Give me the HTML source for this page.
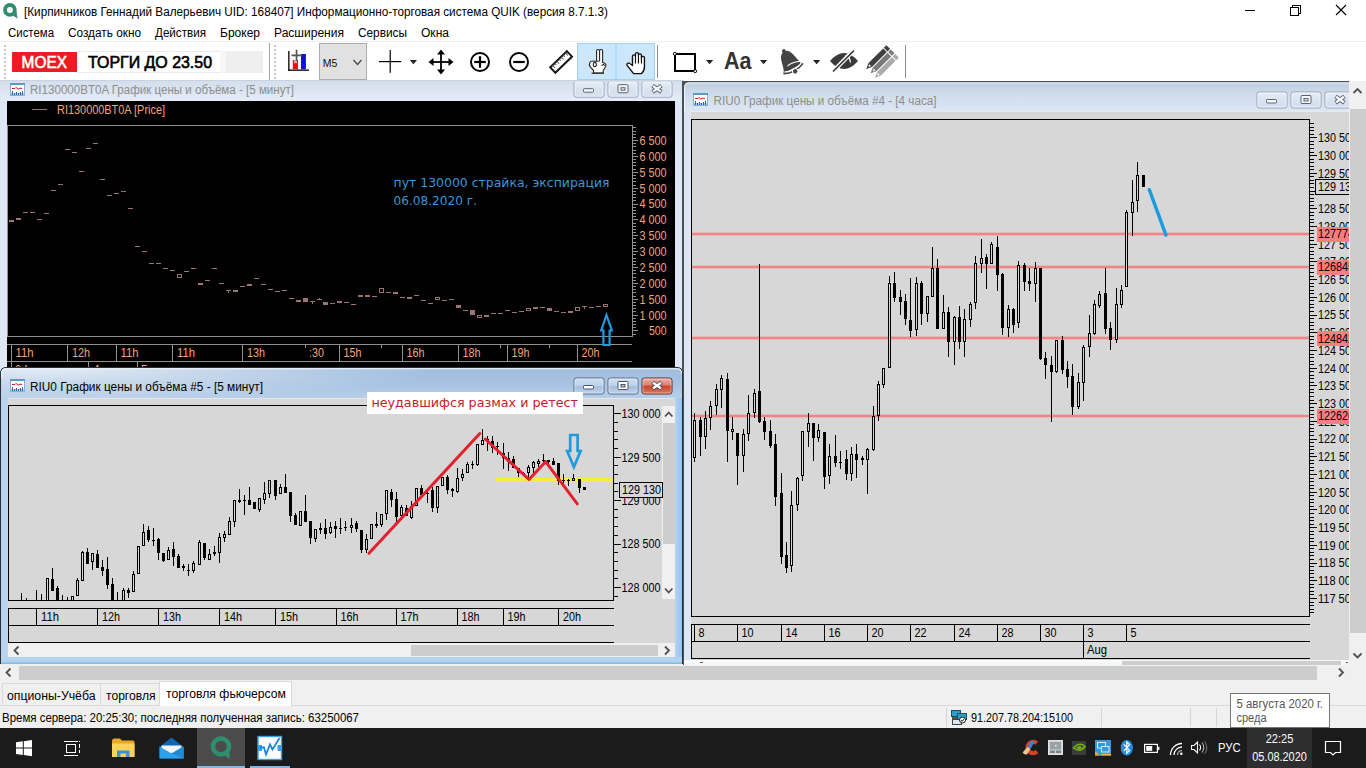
<!DOCTYPE html>
<html lang="ru"><head><meta charset="utf-8"><title>QUIK</title>
<style>html,body{margin:0;padding:0;background:#fff;overflow:hidden}svg{display:block}text{white-space:pre}</style>
</head><body>
<svg width="1366" height="768" viewBox="0 0 1366 768">
<defs><linearGradient id="gInact" x1="0" y1="0" x2="0" y2="1"><stop offset="0" stop-color="#d3deec"/><stop offset="1" stop-color="#e4ecf6"/></linearGradient><linearGradient id="gInact3" x1="0" y1="0" x2="0" y2="1"><stop offset="0" stop-color="#becde1"/><stop offset="0.5" stop-color="#d2deed"/><stop offset="1" stop-color="#dde7f4"/></linearGradient><linearGradient id="gAct" x1="0" y1="0" x2="0" y2="1"><stop offset="0" stop-color="#a0bcdc"/><stop offset="0.5" stop-color="#a8c3e2"/><stop offset="1" stop-color="#b7cfe9"/></linearGradient><radialGradient id="gActGlow" gradientUnits="userSpaceOnUse" cx="40" cy="368" r="1" gradientTransform="translate(40 368) scale(400 34) translate(-40 -368)"><stop offset="0" stop-color="#fff" stop-opacity=".72"/><stop offset=".45" stop-color="#fff" stop-opacity=".38"/><stop offset="1" stop-color="#fff" stop-opacity="0"/></radialGradient><linearGradient id="gBtnI" x1="0" y1="0" x2="0" y2="1"><stop offset="0" stop-color="#e6edf7"/><stop offset="0.5" stop-color="#d9e3f0"/><stop offset="1" stop-color="#d3dfee"/></linearGradient><linearGradient id="gBtnA" x1="0" y1="0" x2="0" y2="1"><stop offset="0" stop-color="#cfdff1"/><stop offset="0.47" stop-color="#bdd2ea"/><stop offset="0.5" stop-color="#a3bfdf"/><stop offset="1" stop-color="#bcd3ec"/></linearGradient><linearGradient id="gBtnX" x1="0" y1="0" x2="0" y2="1"><stop offset="0" stop-color="#eab4a8"/><stop offset="0.45" stop-color="#dd7f6c"/><stop offset="0.5" stop-color="#c8432b"/><stop offset="1" stop-color="#dc7a5e"/></linearGradient><linearGradient id="gActR" x1="0" y1="0" x2="1" y2="0"><stop offset="0" stop-color="#b9d3ee"/><stop offset="0.6" stop-color="#a4c8ee"/><stop offset="1" stop-color="#8cc6f2"/></linearGradient></defs>
<rect x="0" y="0" width="1366" height="80" fill="#ffffff" />
<g transform="translate(3,3)"><circle cx="6.9" cy="6.9" r="4.9" fill="none" stroke="#2f8f6d" stroke-width="3.8"/><path d="M7.5 10.5 L13.6 8.6 L14.4 15.8 Z" fill="#2f8f6d"/></g>
<text x="24" y="16" font-size="12" fill="#000" font-family='"Liberation Sans", sans-serif' textLength="584" lengthAdjust="spacingAndGlyphs" >[Кирпичников Геннадий Валерьевич UID: 168407] Информационно-торговая система QUIK (версия 8.7.1.3)</text>
<rect x="1245" y="10" width="10" height="1" fill="#000" shape-rendering="crispEdges"/>
<g fill="none" stroke="#000" stroke-width="1" shape-rendering="crispEdges"><rect x="1290.5" y="7.5" width="8" height="8"/><path d="M1292.5 7.5 V5.5 H1300.5 V13.5 H1298.5"/></g>
<path d="M1336 5 L1346 15 M1346 5 L1336 15" stroke="#000" stroke-width="1.1" fill="none"/>
<text x="8" y="37" font-size="12" fill="#000" font-family='"Liberation Sans", sans-serif' textLength="46" lengthAdjust="spacingAndGlyphs" >Система</text>
<text x="68" y="37" font-size="12" fill="#000" font-family='"Liberation Sans", sans-serif' textLength="73" lengthAdjust="spacingAndGlyphs" >Создать окно</text>
<text x="155" y="37" font-size="12" fill="#000" font-family='"Liberation Sans", sans-serif' textLength="51" lengthAdjust="spacingAndGlyphs" >Действия</text>
<text x="220" y="37" font-size="12" fill="#000" font-family='"Liberation Sans", sans-serif' textLength="40" lengthAdjust="spacingAndGlyphs" >Брокер</text>
<text x="274" y="37" font-size="12" fill="#000" font-family='"Liberation Sans", sans-serif' textLength="70" lengthAdjust="spacingAndGlyphs" >Расширения</text>
<text x="358" y="37" font-size="12" fill="#000" font-family='"Liberation Sans", sans-serif' textLength="49" lengthAdjust="spacingAndGlyphs" >Сервисы</text>
<text x="421" y="37" font-size="12" fill="#000" font-family='"Liberation Sans", sans-serif' textLength="28" lengthAdjust="spacingAndGlyphs" >Окна</text>
<rect x="0" y="41" width="1366" height="1" fill="#f0f0f0" />
<rect x="4" y="45" width="2" height="2" fill="#c8c8c8" shape-rendering="crispEdges"/>
<rect x="4" y="49" width="2" height="2" fill="#c8c8c8" shape-rendering="crispEdges"/>
<rect x="4" y="53" width="2" height="2" fill="#c8c8c8" shape-rendering="crispEdges"/>
<rect x="4" y="57" width="2" height="2" fill="#c8c8c8" shape-rendering="crispEdges"/>
<rect x="4" y="61" width="2" height="2" fill="#c8c8c8" shape-rendering="crispEdges"/>
<rect x="4" y="65" width="2" height="2" fill="#c8c8c8" shape-rendering="crispEdges"/>
<rect x="4" y="69" width="2" height="2" fill="#c8c8c8" shape-rendering="crispEdges"/>
<rect x="4" y="73" width="2" height="2" fill="#c8c8c8" shape-rendering="crispEdges"/>
<rect x="4" y="77" width="2" height="2" fill="#c8c8c8" shape-rendering="crispEdges"/>
<rect x="274" y="45" width="2" height="2" fill="#c8c8c8" shape-rendering="crispEdges"/>
<rect x="274" y="49" width="2" height="2" fill="#c8c8c8" shape-rendering="crispEdges"/>
<rect x="274" y="53" width="2" height="2" fill="#c8c8c8" shape-rendering="crispEdges"/>
<rect x="274" y="57" width="2" height="2" fill="#c8c8c8" shape-rendering="crispEdges"/>
<rect x="274" y="61" width="2" height="2" fill="#c8c8c8" shape-rendering="crispEdges"/>
<rect x="274" y="65" width="2" height="2" fill="#c8c8c8" shape-rendering="crispEdges"/>
<rect x="274" y="69" width="2" height="2" fill="#c8c8c8" shape-rendering="crispEdges"/>
<rect x="274" y="73" width="2" height="2" fill="#c8c8c8" shape-rendering="crispEdges"/>
<rect x="274" y="77" width="2" height="2" fill="#c8c8c8" shape-rendering="crispEdges"/>
<rect x="12" y="52" width="65" height="20" fill="#ed1c24" />
<text x="21.6" y="67.8" font-size="16.8" fill="#fff" font-family='"Liberation Sans", sans-serif' textLength="45.4" lengthAdjust="spacingAndGlyphs" stroke="#fff" stroke-width=".6">MOEX</text>
<text x="88" y="67.8" font-size="16.8" fill="#000" font-family='"Liberation Sans", sans-serif' textLength="124" lengthAdjust="spacingAndGlyphs" stroke="#000" stroke-width=".65">ТОРГИ ДО 23.50</text>
<rect x="77" y="51" width="143" height="1" fill="#ececec" />
<rect x="77" y="72" width="143" height="1" fill="#ececec" />
<rect x="220" y="51" width="6" height="22" fill="#f7f7f7" />
<rect x="226" y="51" width="37" height="22" fill="#efefef" />
<rect x="269" y="43" width="1" height="37" fill="#a0a0a0" shape-rendering="crispEdges"/>
<g><rect x="288.2" y="51" width="1.3" height="19.8" fill="#000"/><rect x="288.2" y="69.5" width="20.8" height="1.3" fill="#000"/><rect x="292.8" y="60" width="5.2" height="9.3" fill="#e81010"/><rect x="294" y="60" width="3" height="3.2" fill="#f0a0a0"/><rect x="301" y="54" width="4.9" height="15.3" fill="#0a10e0"/><rect x="295.7" y="49.7" width="1.7" height="11.3" fill="#555"/><rect x="291.5" y="54.5" width="10.5" height="1.8" fill="#555"/></g>
<rect x="319" y="43" width="48" height="37" fill="#e1e1e1" />
<rect x="319.5" y="43.5" width="47" height="36" fill="none" stroke="#adadad"/>
<text x="322.8" y="66.6" font-size="11.5" fill="#111" font-family='"Liberation Sans", sans-serif' textLength="14.6" lengthAdjust="spacingAndGlyphs" >M5</text>
<path d="M353.5 60 L357.5 64.5 L361.5 60" stroke="#444" stroke-width="1.2" fill="none"/>
<rect x="379" y="61" width="22.2" height="1.2" fill="#000" />
<rect x="389.6" y="50" width="1.2" height="22.8" fill="#000" />
<path d="M409.8 60 h7.2 l-3.6 4.2 z" fill="#222"/>
<g transform="translate(441,62)" fill="#000"><rect x="-9" y="-0.9" width="18" height="1.8"/><rect x="-0.9" y="-9" width="1.8" height="18"/><path d="M0 -12.5 L4 -7.5 H-4 Z"/><path d="M0 12.5 L4 7.5 H-4 Z"/><path d="M-12.5 0 L-7.5 -4 V4 Z"/><path d="M12.5 0 L7.5 -4 V4 Z"/></g>
<circle cx="480" cy="62" r="9" fill="none" stroke="#000" stroke-width="2"/>
<rect x="474.2" y="60.9" width="11.6" height="2.2" fill="#000" />
<rect x="478.9" y="56.2" width="2.2" height="11.6" fill="#000" />
<circle cx="519" cy="62" r="9" fill="none" stroke="#000" stroke-width="2"/>
<rect x="513.2" y="60.9" width="11.6" height="2.2" fill="#000" />
<g transform="translate(561.1,62) rotate(-44)"><rect x="-11.6" y="-3.7" width="23.2" height="7.4" fill="#fff" stroke="#1c1c1c" stroke-width="2"/><rect x="-9" y="-3.7" width="0.9" height="3.6" fill="#555"/><rect x="-6" y="-3.7" width="0.9" height="2.6" fill="#555"/><rect x="-3" y="-3.7" width="0.9" height="3.6" fill="#555"/><rect x="0" y="-3.7" width="0.9" height="2.6" fill="#555"/><rect x="3" y="-3.7" width="0.9" height="3.6" fill="#555"/><rect x="6" y="-3.7" width="0.9" height="2.6" fill="#555"/><rect x="9" y="-3.7" width="0.9" height="3.6" fill="#555"/></g>
<rect x="577" y="43" width="78" height="37" fill="#cce6fb" />
<rect x="577.5" y="43.5" width="77" height="36" fill="none" stroke="#9fd0f7"/>
<rect x="615.5" y="43" width="1" height="37" fill="#9fd0f7" />
<g transform="translate(597,62)" fill="#fff" stroke="#222" stroke-width="1.1" stroke-linejoin="round"><path d="M-0.4 0 V-11 a1.5 1.5 0 0 1 3 0 V-1 M2.6 -1 V-11 a1.5 1.5 0 0 1 3 0 V0.5 l2.2 .8 q1.6 1 1 3 l-2.6 4.2 v2.5 h-9.6 v-2.5 l-3.4 -3.6 q-1.6 -2.4 -.2 -4.6 q1.6 -2 3.6 -1 z"/><path d="M-5.4 11.2 h12.4" fill="none"/><ellipse cx="-2.2" cy="2.6" rx="1.5" ry="2.2" fill="none"/><path d="M4.6 3.4 l1.8 -1 l1.4 1.2" fill="none"/></g>
<g transform="translate(636.5,62.5) scale(1.15,1.05)" fill="#fff" stroke="#111" stroke-width="1.2" stroke-linejoin="round"><path d="M-3.5 3 V-6 a1.3 1.3 0 0 1 2.6 0 V-8 a1.3 1.3 0 0 1 2.6 0 V-7 a1.3 1.3 0 0 1 2.6 0 V-4.5 a1.3 1.3 0 0 1 2.6 0 V4 q0 4 -2.5 6.5 H-2.5 L-8 3 q-1 -1.6 .6 -2.3 q1.2 -.3 2 .6 z"/><path d="M-.9 -6 V1 M1.7 -7 V1 M4.3 -5 V1" fill="none" stroke-width="1"/></g>
<rect x="657" y="45" width="1" height="33" fill="#8a8a8a" shape-rendering="crispEdges"/>
<rect x="675" y="54" width="20" height="17" fill="#fff" stroke="#000" stroke-width="2"/><circle cx="674.8" cy="53.8" r="1.5" fill="#fff" stroke="#000" stroke-width="1"/><circle cx="695.2" cy="71.2" r="1.5" fill="#fff" stroke="#000" stroke-width="1"/>
<path d="M706 60 h7.2 l-3.6 4.2 z" fill="#222"/>
<text x="724" y="68.6" font-size="24" fill="#333" font-family='"Liberation Sans", sans-serif' font-weight="bold" textLength="27.5" lengthAdjust="spacingAndGlyphs" >Aa</text>
<path d="M760 60 h7.2 l-3.6 4.2 z" fill="#222"/>
<g transform="translate(789.3,61.3) rotate(-28)" fill="#444"><circle cx="0" cy="-11.6" r="1.9"/><path d="M-2 -10.8 C-8.5 -8 -6.5 3.5 -10.8 8 L10.8 8 C6.5 3.5 8.5 -8 2 -10.8 Z"/><path d="M-9.5 7.2 Q0 11.5 9.8 7.2 L9.6 5 Q0 1.5 -4 3.5" fill="none" stroke="#fff" stroke-width="1.1"/><path d="M-11 8.3 Q0 13.6 11.2 8.3" fill="none" stroke="#444" stroke-width="1.6"/><circle cx="0.5" cy="11.6" r="2.7" stroke="#fff" stroke-width=".9"/></g>
<path d="M813 60 h7.2 l-3.6 4.2 z" fill="#222"/>
<g transform="translate(844,61)"><path d="M-14 0 Q0 -16 14 0 Q0 16 -14 0 Z" fill="#3a3a3a"/><path d="M1 -5 Q6 -4.5 6.5 1.5" fill="none" stroke="#fff" stroke-width="1.3"/><path d="M-12 11.5 L10 -11" stroke="#fff" stroke-width="4.2"/><path d="M-11 10.5 L10 -10.5" stroke="#3a3a3a" stroke-width="1.7"/></g>
<g transform="translate(883,61) rotate(-45)"><g transform="translate(0,-6.2)"><rect x="-12" y="-2.6" width="21" height="5.2" fill="#3f3f3f"/><path d="M-12 -2.6 L-17.5 0 L-12 2.6 Z" fill="#3f3f3f"/><circle cx="-13" cy="0" r="1" fill="#fff"/><rect x="10" y="-2.6" width="3.6" height="5.2" fill="#3f3f3f"/></g><g transform="translate(0,0)"><rect x="-12" y="-2.6" width="21" height="5.2" fill="#7a7a7a"/><path d="M-12 -2.6 L-17.5 0 L-12 2.6 Z" fill="#7a7a7a"/><circle cx="-13" cy="0" r="1" fill="#fff"/><rect x="10" y="-2.6" width="3.6" height="5.2" fill="#7a7a7a"/></g><g transform="translate(0,6.2)"><rect x="-12" y="-2.6" width="21" height="5.2" fill="#ababab"/><path d="M-12 -2.6 L-17.5 0 L-12 2.6 Z" fill="#ababab"/><circle cx="-13" cy="0" r="1" fill="#fff"/><rect x="10" y="-2.6" width="3.6" height="5.2" fill="#ababab"/></g></g>
<rect x="905" y="45" width="1" height="33" fill="#8a8a8a" shape-rendering="crispEdges"/>
<rect x="0" y="80" width="684" height="290" fill="#dee8f4" />
<rect x="0" y="80" width="684" height="21" fill="url(#gInact)" />
<rect x="0" y="80" width="684" height="1" fill="#c9d3df" />
<rect x="682" y="81" width="2" height="584" fill="#4a5058" shape-rendering="crispEdges"/>
<g transform="translate(10,83)" shape-rendering="crispEdges"><rect x="0" y="0" width="15" height="13" fill="#8fb0cf"/><rect x="1" y="1" width="13" height="11" fill="#fff"/><rect x="0" y="0" width="15" height="2" fill="#5a9bc4"/><path d="M2 5.5 h3 l1.2 -1.2 l1.6 2 l1.2 -1 h3.2" fill="none" stroke="#c82828" stroke-width="1" shape-rendering="auto"/><rect x="1" y="10" width="13" height="2" fill="#a9cdea"/><rect x="2" y="8" width="1" height="4" fill="#2f66a8"/><rect x="4" y="10" width="1" height="2" fill="#2f66a8"/><rect x="6" y="9" width="1" height="3" fill="#2f66a8"/><rect x="8" y="10" width="1" height="2" fill="#2f66a8"/><rect x="10" y="9" width="1" height="3" fill="#2f66a8"/><rect x="12" y="8" width="1" height="4" fill="#2f66a8"/></g>
<text x="30" y="94" font-size="12" fill="#8d8d8d" font-family='"Liberation Sans", sans-serif' textLength="264" lengthAdjust="spacingAndGlyphs" >RI130000BT0A График цены и объёма - [5 минут]</text>
<clipPath id="cw1b"><rect x="560" y="82" width="124" height="30"/></clipPath><g clip-path="url(#cw1b)">
<rect x="574.0" y="81.2" width="30" height="16" rx="2.5" fill="url(#gBtnI)" stroke="#95a3b8"/>
<rect x="575.0" y="82.2" width="28" height="14" rx="1.5" fill="none" stroke="#fff" stroke-opacity="0.6"/>
<rect x="583.5" y="88.7" width="10" height="3.5" rx=".8" fill="#f4f6fa" stroke="#5c6472" stroke-width="1"/>
<rect x="608.0" y="81.2" width="30" height="16" rx="2.5" fill="url(#gBtnI)" stroke="#95a3b8"/>
<rect x="609.0" y="82.2" width="28" height="14" rx="1.5" fill="none" stroke="#fff" stroke-opacity="0.6"/>
<rect x="618.0" y="84.7" width="10" height="8" rx=".8" fill="#f4f6fa" stroke="#5c6472" stroke-width="1"/><rect x="621.0" y="87.7" width="4" height="2.5" fill="#dbe4f0" stroke="#5c6472" stroke-width="1"/>
<rect x="642.0" y="81.2" width="30" height="16" rx="2.5" fill="url(#gBtnI)" stroke="#95a3b8"/>
<rect x="643.0" y="82.2" width="28" height="14" rx="1.5" fill="none" stroke="#fff" stroke-opacity="0.6"/>
<path d="M652.6 85.60000000000001 L661.4 92.0 M661.4 85.60000000000001 L652.6 92.0" stroke="#5c6472" stroke-width="4.2" stroke-linecap="butt"/><path d="M653.1 86.0 L660.9 91.60000000000001 M660.9 86.0 L653.1 91.60000000000001" stroke="#f4f6fa" stroke-width="2.4" stroke-linecap="butt"/>
</g>
<rect x="7" y="101" width="668" height="268" fill="#000000" />
<g shape-rendering="crispEdges">
<rect x="32" y="109" width="15" height="1" fill="#9c7272" />
<rect x="7" y="125" width="626" height="1" fill="#909090" />
<rect x="7" y="125" width="1" height="212" fill="#909090" />
<rect x="632" y="125" width="1" height="212" fill="#909090" />
<rect x="7" y="336" width="626" height="1" fill="#909090" />
<rect x="7" y="344" width="625" height="1" fill="#909090" />
<rect x="7" y="361" width="625" height="1" fill="#909090" />
<rect x="11" y="344" width="1" height="18" fill="#909090" />
<rect x="67" y="344" width="1" height="18" fill="#909090" />
<rect x="116" y="344" width="1" height="18" fill="#909090" />
<rect x="172" y="344" width="1" height="18" fill="#909090" />
<rect x="242" y="344" width="1" height="18" fill="#909090" />
<rect x="339" y="344" width="1" height="18" fill="#909090" />
<rect x="402" y="344" width="1" height="18" fill="#909090" />
<rect x="458" y="344" width="1" height="18" fill="#909090" />
<rect x="507" y="344" width="1" height="18" fill="#909090" />
<rect x="577" y="344" width="1" height="18" fill="#909090" />
<rect x="305" y="344" width="1" height="4" fill="#909090" />
<rect x="381" y="344" width="1" height="4" fill="#909090" />
<rect x="500" y="344" width="1" height="4" fill="#909090" />
<rect x="549" y="344" width="1" height="4" fill="#909090" />
<rect x="11" y="361" width="1" height="8" fill="#909090" />
<rect x="88" y="361" width="1" height="8" fill="#909090" />
<rect x="137" y="361" width="1" height="8" fill="#909090" />
<rect x="633" y="127" width="3" height="1" fill="#909090" />
<rect x="633" y="131" width="3" height="1" fill="#909090" />
<rect x="633" y="134" width="3" height="1" fill="#909090" />
<rect x="633" y="137" width="3" height="1" fill="#909090" />
<rect x="633" y="140" width="5" height="1" fill="#909090" />
<rect x="633" y="143" width="3" height="1" fill="#909090" />
<rect x="633" y="146" width="3" height="1" fill="#909090" />
<rect x="633" y="150" width="3" height="1" fill="#909090" />
<rect x="633" y="153" width="3" height="1" fill="#909090" />
<rect x="633" y="156" width="5" height="1" fill="#909090" />
<rect x="633" y="159" width="3" height="1" fill="#909090" />
<rect x="633" y="162" width="3" height="1" fill="#909090" />
<rect x="633" y="165" width="3" height="1" fill="#909090" />
<rect x="633" y="169" width="3" height="1" fill="#909090" />
<rect x="633" y="172" width="5" height="1" fill="#909090" />
<rect x="633" y="175" width="3" height="1" fill="#909090" />
<rect x="633" y="178" width="3" height="1" fill="#909090" />
<rect x="633" y="181" width="3" height="1" fill="#909090" />
<rect x="633" y="185" width="3" height="1" fill="#909090" />
<rect x="633" y="188" width="5" height="1" fill="#909090" />
<rect x="633" y="191" width="3" height="1" fill="#909090" />
<rect x="633" y="194" width="3" height="1" fill="#909090" />
<rect x="633" y="197" width="3" height="1" fill="#909090" />
<rect x="633" y="200" width="3" height="1" fill="#909090" />
<rect x="633" y="204" width="5" height="1" fill="#909090" />
<rect x="633" y="207" width="3" height="1" fill="#909090" />
<rect x="633" y="210" width="3" height="1" fill="#909090" />
<rect x="633" y="213" width="3" height="1" fill="#909090" />
<rect x="633" y="216" width="3" height="1" fill="#909090" />
<rect x="633" y="219" width="5" height="1" fill="#909090" />
<rect x="633" y="223" width="3" height="1" fill="#909090" />
<rect x="633" y="226" width="3" height="1" fill="#909090" />
<rect x="633" y="229" width="3" height="1" fill="#909090" />
<rect x="633" y="232" width="3" height="1" fill="#909090" />
<rect x="633" y="235" width="5" height="1" fill="#909090" />
<rect x="633" y="238" width="3" height="1" fill="#909090" />
<rect x="633" y="242" width="3" height="1" fill="#909090" />
<rect x="633" y="245" width="3" height="1" fill="#909090" />
<rect x="633" y="248" width="3" height="1" fill="#909090" />
<rect x="633" y="251" width="5" height="1" fill="#909090" />
<rect x="633" y="254" width="3" height="1" fill="#909090" />
<rect x="633" y="258" width="3" height="1" fill="#909090" />
<rect x="633" y="261" width="3" height="1" fill="#909090" />
<rect x="633" y="264" width="3" height="1" fill="#909090" />
<rect x="633" y="267" width="5" height="1" fill="#909090" />
<rect x="633" y="270" width="3" height="1" fill="#909090" />
<rect x="633" y="273" width="3" height="1" fill="#909090" />
<rect x="633" y="277" width="3" height="1" fill="#909090" />
<rect x="633" y="280" width="3" height="1" fill="#909090" />
<rect x="633" y="283" width="5" height="1" fill="#909090" />
<rect x="633" y="286" width="3" height="1" fill="#909090" />
<rect x="633" y="289" width="3" height="1" fill="#909090" />
<rect x="633" y="292" width="3" height="1" fill="#909090" />
<rect x="633" y="296" width="3" height="1" fill="#909090" />
<rect x="633" y="299" width="5" height="1" fill="#909090" />
<rect x="633" y="302" width="3" height="1" fill="#909090" />
<rect x="633" y="305" width="3" height="1" fill="#909090" />
<rect x="633" y="308" width="3" height="1" fill="#909090" />
<rect x="633" y="311" width="3" height="1" fill="#909090" />
<rect x="633" y="315" width="5" height="1" fill="#909090" />
<rect x="633" y="318" width="3" height="1" fill="#909090" />
<rect x="633" y="321" width="3" height="1" fill="#909090" />
<rect x="633" y="324" width="3" height="1" fill="#909090" />
<rect x="633" y="327" width="3" height="1" fill="#909090" />
<rect x="633" y="330" width="5" height="1" fill="#909090" />
<rect x="633" y="334" width="3" height="1" fill="#909090" />
</g>
<text x="57" y="113.5" font-size="12" fill="#f2a57a" font-family='"Liberation Sans", sans-serif' textLength="108" lengthAdjust="spacingAndGlyphs" >RI130000BT0A [Price]</text>
<text x="666.5" y="145" font-size="12" fill="#f2a57a" font-family='"Liberation Sans", sans-serif' textLength="27" lengthAdjust="spacingAndGlyphs" text-anchor="end" >6 500</text>
<text x="666.5" y="160.865" font-size="12" fill="#f2a57a" font-family='"Liberation Sans", sans-serif' textLength="27" lengthAdjust="spacingAndGlyphs" text-anchor="end" >6 000</text>
<text x="666.5" y="176.73" font-size="12" fill="#f2a57a" font-family='"Liberation Sans", sans-serif' textLength="27" lengthAdjust="spacingAndGlyphs" text-anchor="end" >5 500</text>
<text x="666.5" y="192.595" font-size="12" fill="#f2a57a" font-family='"Liberation Sans", sans-serif' textLength="27" lengthAdjust="spacingAndGlyphs" text-anchor="end" >5 000</text>
<text x="666.5" y="208.46" font-size="12" fill="#f2a57a" font-family='"Liberation Sans", sans-serif' textLength="27" lengthAdjust="spacingAndGlyphs" text-anchor="end" >4 500</text>
<text x="666.5" y="224.325" font-size="12" fill="#f2a57a" font-family='"Liberation Sans", sans-serif' textLength="27" lengthAdjust="spacingAndGlyphs" text-anchor="end" >4 000</text>
<text x="666.5" y="240.19" font-size="12" fill="#f2a57a" font-family='"Liberation Sans", sans-serif' textLength="27" lengthAdjust="spacingAndGlyphs" text-anchor="end" >3 500</text>
<text x="666.5" y="256.055" font-size="12" fill="#f2a57a" font-family='"Liberation Sans", sans-serif' textLength="27" lengthAdjust="spacingAndGlyphs" text-anchor="end" >3 000</text>
<text x="666.5" y="271.92" font-size="12" fill="#f2a57a" font-family='"Liberation Sans", sans-serif' textLength="27" lengthAdjust="spacingAndGlyphs" text-anchor="end" >2 500</text>
<text x="666.5" y="287.785" font-size="12" fill="#f2a57a" font-family='"Liberation Sans", sans-serif' textLength="27" lengthAdjust="spacingAndGlyphs" text-anchor="end" >2 000</text>
<text x="666.5" y="303.65" font-size="12" fill="#f2a57a" font-family='"Liberation Sans", sans-serif' textLength="27" lengthAdjust="spacingAndGlyphs" text-anchor="end" >1 500</text>
<text x="666.5" y="319.515" font-size="12" fill="#f2a57a" font-family='"Liberation Sans", sans-serif' textLength="27" lengthAdjust="spacingAndGlyphs" text-anchor="end" >1 000</text>
<text x="666.5" y="335.38" font-size="12" fill="#f2a57a" font-family='"Liberation Sans", sans-serif' textLength="17.5" lengthAdjust="spacingAndGlyphs" text-anchor="end" >500</text>
<text x="15.6" y="357" font-size="12" fill="#f2a57a" font-family='"Liberation Sans", sans-serif' textLength="18" lengthAdjust="spacingAndGlyphs" >11h</text>
<text x="72" y="357" font-size="12" fill="#f2a57a" font-family='"Liberation Sans", sans-serif' textLength="18" lengthAdjust="spacingAndGlyphs" >12h</text>
<text x="120.5" y="357" font-size="12" fill="#f2a57a" font-family='"Liberation Sans", sans-serif' textLength="18" lengthAdjust="spacingAndGlyphs" >11h</text>
<text x="177" y="357" font-size="12" fill="#f2a57a" font-family='"Liberation Sans", sans-serif' textLength="18" lengthAdjust="spacingAndGlyphs" >11h</text>
<text x="247" y="357" font-size="12" fill="#f2a57a" font-family='"Liberation Sans", sans-serif' textLength="18" lengthAdjust="spacingAndGlyphs" >13h</text>
<text x="309" y="357" font-size="12" fill="#f2a57a" font-family='"Liberation Sans", sans-serif' textLength="15" lengthAdjust="spacingAndGlyphs" >:30</text>
<text x="343.5" y="357" font-size="12" fill="#f2a57a" font-family='"Liberation Sans", sans-serif' textLength="18" lengthAdjust="spacingAndGlyphs" >15h</text>
<text x="406.5" y="357" font-size="12" fill="#f2a57a" font-family='"Liberation Sans", sans-serif' textLength="18" lengthAdjust="spacingAndGlyphs" >16h</text>
<text x="462.5" y="357" font-size="12" fill="#f2a57a" font-family='"Liberation Sans", sans-serif' textLength="18" lengthAdjust="spacingAndGlyphs" >18h</text>
<text x="511.5" y="357" font-size="12" fill="#f2a57a" font-family='"Liberation Sans", sans-serif' textLength="18" lengthAdjust="spacingAndGlyphs" >19h</text>
<text x="581.5" y="357" font-size="12" fill="#f2a57a" font-family='"Liberation Sans", sans-serif' textLength="18" lengthAdjust="spacingAndGlyphs" >20h</text>
<clipPath id="cdt1"><rect x="7" y="360" width="625" height="8"/></clipPath><g clip-path="url(#cdt1)">
<text x="15.5" y="373.5" font-size="12" fill="#f2a57a" font-family='"Liberation Sans", sans-serif' textLength="24" lengthAdjust="spacingAndGlyphs" >3 Aug</text>
<text x="93" y="373.5" font-size="12" fill="#f2a57a" font-family='"Liberation Sans", sans-serif' >4</text>
<text x="141" y="373.5" font-size="12" fill="#f2a57a" font-family='"Liberation Sans", sans-serif' >5</text>
</g>
<text x="393.5" y="186.8" font-size="12" fill="#3a96d6" font-family='"DejaVu Sans", "Liberation Sans", sans-serif' textLength="216" lengthAdjust="spacingAndGlyphs" >пут 130000 страйка, экспирация</text>
<text x="393.5" y="205.4" font-size="12" fill="#3a96d6" font-family='"DejaVu Sans", "Liberation Sans", sans-serif' textLength="83.5" lengthAdjust="spacingAndGlyphs" >06.08.2020 г.</text>
<g shape-rendering="crispEdges">
<rect x="9" y="220" width="5" height="2" fill="#9c7272" />
<rect x="16" y="218" width="5" height="2" fill="#9c7272" />
<rect x="23" y="212" width="5" height="1" fill="#9c7272" />
<rect x="30" y="212" width="5" height="1" fill="#9c7272" />
<rect x="37" y="219" width="5" height="1" fill="#9c7272" />
<rect x="44" y="213" width="5" height="1" fill="#9c7272" />
<rect x="51" y="190" width="5" height="1" fill="#9c7272" />
<rect x="58" y="184" width="5" height="1" fill="#9c7272" />
<rect x="65" y="149" width="5" height="1" fill="#9c7272" />
<rect x="72" y="152" width="5" height="1" fill="#9c7272" />
<rect x="79" y="171" width="5" height="1" fill="#9c7272" />
<rect x="86" y="148" width="5" height="1" fill="#9c7272" />
<rect x="93" y="143" width="5" height="1" fill="#9c7272" />
<rect x="100" y="179" width="5" height="1" fill="#9c7272" />
<rect x="107" y="195" width="5" height="1" fill="#9c7272" />
<rect x="114" y="193" width="5" height="1" fill="#9c7272" />
<rect x="121" y="191" width="5" height="1" fill="#9c7272" />
<rect x="128" y="208" width="5" height="1" fill="#9c7272" />
<rect x="135" y="246" width="5" height="1" fill="#9c7272" />
<rect x="142" y="251" width="5" height="1" fill="#9c7272" />
<rect x="149" y="263" width="5" height="1" fill="#9c7272" />
<rect x="156" y="263" width="5" height="1" fill="#9c7272" />
<rect x="163" y="268" width="5" height="1" fill="#9c7272" />
<rect x="170" y="270" width="5" height="1" fill="#9c7272" />
<rect x="177" y="274" width="5" height="4" fill="#9c7272" />
<rect x="178" y="275" width="3" height="2" fill="#000" />
<rect x="184" y="271" width="5" height="1" fill="#9c7272" />
<rect x="191" y="268" width="5" height="1" fill="#9c7272" />
<rect x="198" y="283" width="5" height="2" fill="#9c7272" />
<rect x="205" y="280" width="5" height="1" fill="#9c7272" />
<rect x="212" y="268" width="5" height="1" fill="#9c7272" />
<rect x="219" y="283" width="5" height="1" fill="#9c7272" />
<rect x="226" y="290" width="5" height="1" fill="#9c7272" />
<rect x="228" y="291" width="1" height="2" fill="#9c7272" />
<rect x="233" y="290" width="5" height="2" fill="#9c7272" />
<rect x="240" y="286" width="5" height="1" fill="#9c7272" />
<rect x="247" y="284" width="5" height="2" fill="#9c7272" />
<rect x="254" y="278" width="5" height="1" fill="#9c7272" />
<rect x="261" y="284" width="5" height="1" fill="#9c7272" />
<rect x="268" y="289" width="5" height="1" fill="#9c7272" />
<rect x="275" y="291" width="5" height="1" fill="#9c7272" />
<rect x="282" y="290" width="5" height="1" fill="#9c7272" />
<rect x="289" y="298" width="5" height="1" fill="#9c7272" />
<rect x="296" y="300" width="5" height="2" fill="#9c7272" />
<rect x="303" y="298" width="5" height="4" fill="#9c7272" />
<rect x="310" y="301" width="5" height="1" fill="#9c7272" />
<rect x="312" y="302" width="1" height="2" fill="#9c7272" />
<rect x="317" y="299" width="5" height="1" fill="#9c7272" />
<rect x="319" y="298" width="1" height="1" fill="#9c7272" />
<rect x="323" y="302" width="5" height="3" fill="#9c7272" />
<rect x="330" y="303" width="5" height="1" fill="#9c7272" />
<rect x="337" y="301" width="5" height="2" fill="#9c7272" />
<rect x="344" y="302" width="5" height="1" fill="#9c7272" />
<rect x="351" y="304" width="5" height="1" fill="#9c7272" />
<rect x="358" y="295" width="5" height="2" fill="#9c7272" />
<rect x="365" y="295" width="5" height="2" fill="#9c7272" />
<rect x="372" y="296" width="5" height="1" fill="#9c7272" />
<rect x="379" y="288" width="5" height="5" fill="#9c7272" />
<rect x="380" y="289" width="3" height="3" fill="#000" />
<rect x="386" y="292" width="5" height="1" fill="#9c7272" />
<rect x="393" y="292" width="5" height="2" fill="#9c7272" />
<rect x="400" y="297" width="5" height="1" fill="#9c7272" />
<rect x="407" y="297" width="5" height="2" fill="#9c7272" />
<rect x="414" y="295" width="5" height="1" fill="#9c7272" />
<rect x="421" y="300" width="5" height="1" fill="#9c7272" />
<rect x="428" y="303" width="5" height="1" fill="#9c7272" />
<rect x="435" y="297" width="5" height="3" fill="#9c7272" />
<rect x="436" y="298" width="3" height="1" fill="#000" />
<rect x="442" y="300" width="5" height="1" fill="#9c7272" />
<rect x="449" y="299" width="5" height="1" fill="#9c7272" />
<rect x="456" y="305" width="5" height="3" fill="#9c7272" />
<rect x="463" y="310" width="5" height="1" fill="#9c7272" />
<rect x="470" y="310" width="5" height="5" fill="#9c7272" />
<rect x="477" y="315" width="5" height="3" fill="#9c7272" />
<rect x="478" y="316" width="3" height="1" fill="#000" />
<rect x="484" y="315" width="5" height="2" fill="#9c7272" />
<rect x="491" y="313" width="5" height="1" fill="#9c7272" />
<rect x="498" y="313" width="5" height="1" fill="#9c7272" />
<rect x="505" y="310" width="5" height="1" fill="#9c7272" />
<rect x="512" y="312" width="5" height="1" fill="#9c7272" />
<rect x="519" y="311" width="5" height="1" fill="#9c7272" />
<rect x="526" y="308" width="5" height="3" fill="#9c7272" />
<rect x="527" y="309" width="3" height="1" fill="#000" />
<rect x="533" y="307" width="5" height="2" fill="#9c7272" />
<rect x="540" y="307" width="5" height="1" fill="#9c7272" />
<rect x="547" y="308" width="5" height="3" fill="#9c7272" />
<rect x="554" y="311" width="5" height="1" fill="#9c7272" />
<rect x="561" y="312" width="5" height="1" fill="#9c7272" />
<rect x="568" y="311" width="5" height="2" fill="#9c7272" />
<rect x="575" y="307" width="5" height="4" fill="#9c7272" />
<rect x="576" y="308" width="3" height="2" fill="#000" />
<rect x="582" y="306" width="5" height="1" fill="#9c7272" />
<rect x="584" y="307" width="1" height="2" fill="#9c7272" />
<rect x="589" y="307" width="5" height="1" fill="#9c7272" />
<rect x="596" y="306" width="5" height="1" fill="#9c7272" />
<rect x="603" y="304" width="5" height="3" fill="#9c7272" />
<rect x="604" y="305" width="3" height="1" fill="#000" />
</g>
<path d="M606.5 315 L611.8 330.5 H609.6 V345 H603.4 V330.5 H601.2 Z" fill="none" stroke="#1e9ae0" stroke-width="2.2" stroke-linejoin="miter"/>
<rect x="684" y="81" width="666" height="584" fill="#dde7f4" />
<rect x="684" y="82" width="665" height="30" fill="url(#gInact3)" />
<path d="M682 81 H1349 V82.3 H689 Q684 82.3 684 87.3 V120 H682 Z" fill="#4a5058"/>
<path d="M1349 83 H689.5 Q684.6 83 684.6 88 V112" fill="none" stroke="#eef3f9" stroke-width="1"/>
<rect x="691" y="111" width="658" height="550" fill="#d7d7d7" />
<rect x="691" y="111" width="658" height="1" fill="#e6e9ee" />
<rect x="684" y="660" width="665" height="5" fill="#f4f6f9" />
<rect x="684" y="661" width="665" height="1" fill="#ffffff" />
<rect x="700" y="662" width="3" height="1" fill="#555" />
<rect x="1122" y="661" width="219" height="4" fill="#cdcdcd" />
<rect x="1346" y="662" width="2" height="1" fill="#555" />
<g transform="translate(693,93)" shape-rendering="crispEdges"><rect x="0" y="0" width="15" height="13" fill="#8fb0cf"/><rect x="1" y="1" width="13" height="11" fill="#fff"/><rect x="0" y="0" width="15" height="2" fill="#5a9bc4"/><path d="M2 5.5 h3 l1.2 -1.2 l1.6 2 l1.2 -1 h3.2" fill="none" stroke="#c82828" stroke-width="1" shape-rendering="auto"/><rect x="1" y="10" width="13" height="2" fill="#a9cdea"/><rect x="2" y="8" width="1" height="4" fill="#2f66a8"/><rect x="4" y="10" width="1" height="2" fill="#2f66a8"/><rect x="6" y="9" width="1" height="3" fill="#2f66a8"/><rect x="8" y="10" width="1" height="2" fill="#2f66a8"/><rect x="10" y="9" width="1" height="3" fill="#2f66a8"/><rect x="12" y="8" width="1" height="4" fill="#2f66a8"/></g>
<text x="713.5" y="105" font-size="12" fill="#8d8d8d" font-family='"Liberation Sans", sans-serif' textLength="223" lengthAdjust="spacingAndGlyphs" >RIU0 График цены и объёма #4 - [4 часа]</text>
<clipPath id="cw3"><rect x="684" y="81" width="665" height="584"/></clipPath>
<g clip-path="url(#cw3)">
<rect x="1257.0" y="92.0" width="30" height="16" rx="2.5" fill="url(#gBtnI)" stroke="#95a3b8"/>
<rect x="1258.0" y="93.0" width="28" height="14" rx="1.5" fill="none" stroke="#fff" stroke-opacity="0.6"/>
<rect x="1266.5" y="99.5" width="10" height="3.5" rx=".8" fill="#f4f6fa" stroke="#5c6472" stroke-width="1"/>
<rect x="1291.0" y="92.0" width="30" height="16" rx="2.5" fill="url(#gBtnI)" stroke="#95a3b8"/>
<rect x="1292.0" y="93.0" width="28" height="14" rx="1.5" fill="none" stroke="#fff" stroke-opacity="0.6"/>
<rect x="1301.0" y="95.5" width="10" height="8" rx=".8" fill="#f4f6fa" stroke="#5c6472" stroke-width="1"/><rect x="1304.0" y="98.5" width="4" height="2.5" fill="#dbe4f0" stroke="#5c6472" stroke-width="1"/>
<rect x="1325.0" y="92.0" width="30" height="16" rx="2.5" fill="url(#gBtnI)" stroke="#95a3b8"/>
<rect x="1326.0" y="93.0" width="28" height="14" rx="1.5" fill="none" stroke="#fff" stroke-opacity="0.6"/>
<path d="M1335.6 96.4 L1344.4 102.8 M1344.4 96.4 L1335.6 102.8" stroke="#5c6472" stroke-width="4.2" stroke-linecap="butt"/><path d="M1336.1 96.8 L1343.9 102.4 M1343.9 96.8 L1336.1 102.4" stroke="#f4f6fa" stroke-width="2.4" stroke-linecap="butt"/>
</g>
<g shape-rendering="crispEdges">
<rect x="692" y="233" width="618" height="2" fill="#f08585" />
<rect x="692" y="232" width="618" height="1" fill="#e0bcbc" />
<rect x="692" y="235" width="618" height="1" fill="#e0bcbc" />
<rect x="692" y="266" width="618" height="2" fill="#f08585" />
<rect x="692" y="265" width="618" height="1" fill="#e0bcbc" />
<rect x="692" y="268" width="618" height="1" fill="#e0bcbc" />
<rect x="692" y="337" width="618" height="2" fill="#f08585" />
<rect x="692" y="336" width="618" height="1" fill="#e0bcbc" />
<rect x="692" y="339" width="618" height="1" fill="#e0bcbc" />
<rect x="692" y="415" width="618" height="2" fill="#f08585" />
<rect x="692" y="414" width="618" height="1" fill="#e0bcbc" />
<rect x="692" y="417" width="618" height="1" fill="#e0bcbc" />
</g>
<g shape-rendering="crispEdges">
<rect x="694" y="413" width="1" height="49" fill="#000" />
<rect x="693" y="420" width="3" height="38" fill="#000" />
<rect x="694" y="421" width="1" height="36" fill="#d7d7d7" />
<rect x="700" y="417" width="1" height="39" fill="#000" />
<rect x="699" y="420" width="3" height="17" fill="#000" />
<rect x="705" y="411" width="1" height="38" fill="#000" />
<rect x="704" y="418" width="3" height="19" fill="#000" />
<rect x="705" y="419" width="1" height="17" fill="#d7d7d7" />
<rect x="710" y="401" width="1" height="29" fill="#000" />
<rect x="709" y="406" width="3" height="12" fill="#000" />
<rect x="710" y="407" width="1" height="10" fill="#d7d7d7" />
<rect x="716" y="384" width="1" height="31" fill="#000" />
<rect x="715" y="389" width="3" height="17" fill="#000" />
<rect x="716" y="390" width="1" height="15" fill="#d7d7d7" />
<rect x="721" y="375" width="1" height="33" fill="#000" />
<rect x="720" y="378" width="3" height="12" fill="#000" />
<rect x="721" y="379" width="1" height="10" fill="#d7d7d7" />
<rect x="727" y="373" width="1" height="89" fill="#000" />
<rect x="726" y="379" width="3" height="52" fill="#000" />
<rect x="732" y="417" width="1" height="23" fill="#000" />
<rect x="731" y="429" width="3" height="3" fill="#000" />
<rect x="732" y="430" width="1" height="1" fill="#d7d7d7" />
<rect x="737" y="433" width="1" height="52" fill="#000" />
<rect x="736" y="433" width="3" height="23" fill="#000" />
<rect x="743" y="429" width="1" height="43" fill="#000" />
<rect x="742" y="434" width="3" height="22" fill="#000" />
<rect x="743" y="435" width="1" height="20" fill="#d7d7d7" />
<rect x="748" y="395" width="1" height="46" fill="#000" />
<rect x="747" y="413" width="3" height="21" fill="#000" />
<rect x="748" y="414" width="1" height="19" fill="#d7d7d7" />
<rect x="754" y="389" width="1" height="29" fill="#000" />
<rect x="753" y="393" width="3" height="20" fill="#000" />
<rect x="754" y="394" width="1" height="18" fill="#d7d7d7" />
<rect x="759" y="264" width="1" height="159" fill="#000" />
<rect x="758" y="391" width="3" height="31" fill="#000" />
<rect x="764" y="417" width="1" height="23" fill="#000" />
<rect x="763" y="421" width="3" height="11" fill="#000" />
<rect x="770" y="420" width="1" height="28" fill="#000" />
<rect x="769" y="431" width="3" height="15" fill="#000" />
<rect x="775" y="434" width="1" height="72" fill="#000" />
<rect x="774" y="444" width="3" height="53" fill="#000" />
<rect x="781" y="473" width="1" height="91" fill="#000" />
<rect x="780" y="493" width="3" height="64" fill="#000" />
<rect x="786" y="542" width="1" height="31" fill="#000" />
<rect x="785" y="555" width="3" height="13" fill="#000" />
<rect x="791" y="491" width="1" height="81" fill="#000" />
<rect x="790" y="505" width="3" height="61" fill="#000" />
<rect x="791" y="506" width="1" height="59" fill="#d7d7d7" />
<rect x="797" y="477" width="1" height="34" fill="#000" />
<rect x="796" y="478" width="3" height="27" fill="#000" />
<rect x="797" y="479" width="1" height="25" fill="#d7d7d7" />
<rect x="802" y="431" width="1" height="50" fill="#000" />
<rect x="801" y="431" width="3" height="45" fill="#000" />
<rect x="802" y="432" width="1" height="43" fill="#d7d7d7" />
<rect x="808" y="413" width="1" height="34" fill="#000" />
<rect x="807" y="423" width="3" height="9" fill="#000" />
<rect x="808" y="424" width="1" height="7" fill="#d7d7d7" />
<rect x="813" y="423" width="1" height="38" fill="#000" />
<rect x="812" y="423" width="3" height="15" fill="#000" />
<rect x="818" y="424" width="1" height="18" fill="#000" />
<rect x="817" y="430" width="3" height="8" fill="#000" />
<rect x="818" y="431" width="1" height="6" fill="#d7d7d7" />
<rect x="824" y="432" width="1" height="57" fill="#000" />
<rect x="823" y="432" width="3" height="45" fill="#000" />
<rect x="829" y="444" width="1" height="40" fill="#000" />
<rect x="828" y="456" width="3" height="20" fill="#000" />
<rect x="829" y="457" width="1" height="18" fill="#d7d7d7" />
<rect x="835" y="435" width="1" height="32" fill="#000" />
<rect x="834" y="456" width="3" height="7" fill="#000" />
<rect x="840" y="451" width="1" height="18" fill="#000" />
<rect x="839" y="462" width="3" height="1" fill="#000" />
<rect x="846" y="450" width="1" height="30" fill="#000" />
<rect x="845" y="459" width="3" height="15" fill="#000" />
<rect x="851" y="447" width="1" height="34" fill="#000" />
<rect x="850" y="454" width="3" height="20" fill="#000" />
<rect x="851" y="455" width="1" height="18" fill="#d7d7d7" />
<rect x="856" y="444" width="1" height="34" fill="#000" />
<rect x="855" y="454" width="3" height="6" fill="#000" />
<rect x="862" y="456" width="1" height="9" fill="#000" />
<rect x="861" y="458" width="3" height="2" fill="#000" />
<rect x="867" y="448" width="1" height="46" fill="#000" />
<rect x="866" y="449" width="3" height="11" fill="#000" />
<rect x="867" y="450" width="1" height="9" fill="#d7d7d7" />
<rect x="873" y="406" width="1" height="45" fill="#000" />
<rect x="872" y="416" width="3" height="34" fill="#000" />
<rect x="873" y="417" width="1" height="32" fill="#d7d7d7" />
<rect x="878" y="381" width="1" height="40" fill="#000" />
<rect x="877" y="384" width="3" height="32" fill="#000" />
<rect x="878" y="385" width="1" height="30" fill="#d7d7d7" />
<rect x="883" y="368" width="1" height="20" fill="#000" />
<rect x="882" y="368" width="3" height="17" fill="#000" />
<rect x="883" y="369" width="1" height="15" fill="#d7d7d7" />
<rect x="889" y="276" width="1" height="92" fill="#000" />
<rect x="888" y="283" width="3" height="85" fill="#000" />
<rect x="889" y="284" width="1" height="83" fill="#d7d7d7" />
<rect x="894" y="272" width="1" height="30" fill="#000" />
<rect x="893" y="283" width="3" height="15" fill="#000" />
<rect x="900" y="290" width="1" height="25" fill="#000" />
<rect x="899" y="297" width="3" height="5" fill="#000" />
<rect x="905" y="294" width="1" height="31" fill="#000" />
<rect x="904" y="301" width="3" height="18" fill="#000" />
<rect x="910" y="278" width="1" height="59" fill="#000" />
<rect x="909" y="320" width="3" height="11" fill="#000" />
<rect x="916" y="277" width="1" height="59" fill="#000" />
<rect x="915" y="283" width="3" height="47" fill="#000" />
<rect x="916" y="284" width="1" height="45" fill="#d7d7d7" />
<rect x="921" y="281" width="1" height="44" fill="#000" />
<rect x="920" y="283" width="3" height="31" fill="#000" />
<rect x="927" y="296" width="1" height="26" fill="#000" />
<rect x="926" y="296" width="3" height="18" fill="#000" />
<rect x="927" y="297" width="1" height="16" fill="#d7d7d7" />
<rect x="932" y="247" width="1" height="50" fill="#000" />
<rect x="931" y="268" width="3" height="29" fill="#000" />
<rect x="932" y="269" width="1" height="27" fill="#d7d7d7" />
<rect x="937" y="259" width="1" height="70" fill="#000" />
<rect x="936" y="268" width="3" height="61" fill="#000" />
<rect x="943" y="295" width="1" height="34" fill="#000" />
<rect x="942" y="312" width="3" height="17" fill="#000" />
<rect x="943" y="313" width="1" height="15" fill="#d7d7d7" />
<rect x="948" y="307" width="1" height="50" fill="#000" />
<rect x="947" y="312" width="3" height="30" fill="#000" />
<rect x="954" y="316" width="1" height="49" fill="#000" />
<rect x="953" y="317" width="3" height="25" fill="#000" />
<rect x="954" y="318" width="1" height="23" fill="#d7d7d7" />
<rect x="959" y="306" width="1" height="43" fill="#000" />
<rect x="958" y="317" width="3" height="25" fill="#000" />
<rect x="964" y="309" width="1" height="48" fill="#000" />
<rect x="963" y="319" width="3" height="23" fill="#000" />
<rect x="964" y="320" width="1" height="21" fill="#d7d7d7" />
<rect x="970" y="302" width="1" height="25" fill="#000" />
<rect x="969" y="304" width="3" height="16" fill="#000" />
<rect x="970" y="305" width="1" height="14" fill="#d7d7d7" />
<rect x="975" y="256" width="1" height="53" fill="#000" />
<rect x="974" y="263" width="3" height="40" fill="#000" />
<rect x="975" y="264" width="1" height="38" fill="#d7d7d7" />
<rect x="981" y="239" width="1" height="34" fill="#000" />
<rect x="980" y="258" width="3" height="6" fill="#000" />
<rect x="981" y="259" width="1" height="4" fill="#d7d7d7" />
<rect x="986" y="254" width="1" height="35" fill="#000" />
<rect x="985" y="257" width="3" height="7" fill="#000" />
<rect x="991" y="242" width="1" height="22" fill="#000" />
<rect x="990" y="244" width="3" height="20" fill="#000" />
<rect x="991" y="245" width="1" height="18" fill="#d7d7d7" />
<rect x="997" y="236" width="1" height="55" fill="#000" />
<rect x="996" y="247" width="3" height="28" fill="#000" />
<rect x="1002" y="273" width="1" height="62" fill="#000" />
<rect x="1001" y="274" width="3" height="54" fill="#000" />
<rect x="1008" y="305" width="1" height="32" fill="#000" />
<rect x="1007" y="309" width="3" height="19" fill="#000" />
<rect x="1008" y="310" width="1" height="17" fill="#d7d7d7" />
<rect x="1013" y="308" width="1" height="25" fill="#000" />
<rect x="1012" y="309" width="3" height="16" fill="#000" />
<rect x="1018" y="261" width="1" height="67" fill="#000" />
<rect x="1017" y="265" width="3" height="58" fill="#000" />
<rect x="1018" y="266" width="1" height="56" fill="#d7d7d7" />
<rect x="1024" y="263" width="1" height="28" fill="#000" />
<rect x="1023" y="265" width="3" height="17" fill="#000" />
<rect x="1029" y="268" width="1" height="23" fill="#000" />
<rect x="1028" y="281" width="3" height="3" fill="#000" />
<rect x="1035" y="262" width="1" height="40" fill="#000" />
<rect x="1034" y="268" width="3" height="16" fill="#000" />
<rect x="1035" y="269" width="1" height="14" fill="#d7d7d7" />
<rect x="1040" y="268" width="1" height="92" fill="#000" />
<rect x="1039" y="268" width="3" height="91" fill="#000" />
<rect x="1045" y="352" width="1" height="27" fill="#000" />
<rect x="1044" y="358" width="3" height="7" fill="#000" />
<rect x="1051" y="356" width="1" height="66" fill="#000" />
<rect x="1050" y="365" width="3" height="7" fill="#000" />
<rect x="1056" y="340" width="1" height="33" fill="#000" />
<rect x="1055" y="340" width="3" height="32" fill="#000" />
<rect x="1056" y="341" width="1" height="30" fill="#d7d7d7" />
<rect x="1062" y="336" width="1" height="38" fill="#000" />
<rect x="1061" y="340" width="3" height="30" fill="#000" />
<rect x="1067" y="361" width="1" height="27" fill="#000" />
<rect x="1066" y="369" width="3" height="8" fill="#000" />
<rect x="1072" y="364" width="1" height="51" fill="#000" />
<rect x="1071" y="376" width="3" height="31" fill="#000" />
<rect x="1078" y="373" width="1" height="36" fill="#000" />
<rect x="1077" y="382" width="3" height="25" fill="#000" />
<rect x="1078" y="383" width="1" height="23" fill="#d7d7d7" />
<rect x="1083" y="345" width="1" height="56" fill="#000" />
<rect x="1082" y="347" width="3" height="36" fill="#000" />
<rect x="1083" y="348" width="1" height="34" fill="#d7d7d7" />
<rect x="1089" y="315" width="1" height="42" fill="#000" />
<rect x="1088" y="333" width="3" height="14" fill="#000" />
<rect x="1089" y="334" width="1" height="12" fill="#d7d7d7" />
<rect x="1094" y="300" width="1" height="35" fill="#000" />
<rect x="1093" y="304" width="3" height="30" fill="#000" />
<rect x="1094" y="305" width="1" height="28" fill="#d7d7d7" />
<rect x="1099" y="291" width="1" height="17" fill="#000" />
<rect x="1098" y="294" width="3" height="12" fill="#000" />
<rect x="1099" y="295" width="1" height="10" fill="#d7d7d7" />
<rect x="1105" y="268" width="1" height="66" fill="#000" />
<rect x="1104" y="293" width="3" height="36" fill="#000" />
<rect x="1110" y="322" width="1" height="28" fill="#000" />
<rect x="1109" y="328" width="3" height="12" fill="#000" />
<rect x="1116" y="288" width="1" height="55" fill="#000" />
<rect x="1115" y="304" width="3" height="36" fill="#000" />
<rect x="1116" y="305" width="1" height="34" fill="#d7d7d7" />
<rect x="1121" y="285" width="1" height="23" fill="#000" />
<rect x="1120" y="290" width="3" height="15" fill="#000" />
<rect x="1121" y="291" width="1" height="13" fill="#d7d7d7" />
<rect x="1126" y="210" width="1" height="77" fill="#000" />
<rect x="1125" y="212" width="3" height="75" fill="#000" />
<rect x="1126" y="213" width="1" height="73" fill="#d7d7d7" />
<rect x="1132" y="180" width="1" height="56" fill="#000" />
<rect x="1131" y="202" width="3" height="11" fill="#000" />
<rect x="1132" y="203" width="1" height="9" fill="#d7d7d7" />
<rect x="1137" y="162" width="1" height="50" fill="#000" />
<rect x="1136" y="175" width="3" height="26" fill="#000" />
<rect x="1137" y="176" width="1" height="24" fill="#d7d7d7" />
<rect x="1143" y="175" width="1" height="12" fill="#000" />
<rect x="1142" y="175" width="3" height="12" fill="#000" />
</g>
<line x1="1149.3" y1="189.7" x2="1166" y2="235.1" stroke="#1e9ae0" stroke-width="3.4" stroke-linecap="round"/>
<g shape-rendering="crispEdges">
<rect x="691" y="119" width="619" height="1" fill="#000" />
<rect x="691" y="119" width="1" height="498" fill="#000" />
<rect x="1309" y="119" width="1" height="498" fill="#000" />
<rect x="691" y="616" width="619" height="1" fill="#000" />
<rect x="691" y="624" width="619" height="1" fill="#000" />
<rect x="691" y="641" width="619" height="1" fill="#000" />
<rect x="691" y="658" width="619" height="1" fill="#000" />
<rect x="691" y="624" width="1" height="35" fill="#000" />
<rect x="694" y="624" width="1" height="18" fill="#000" />
<rect x="737" y="624" width="1" height="18" fill="#000" />
<rect x="781" y="624" width="1" height="18" fill="#000" />
<rect x="824" y="624" width="1" height="18" fill="#000" />
<rect x="867" y="624" width="1" height="18" fill="#000" />
<rect x="910" y="624" width="1" height="18" fill="#000" />
<rect x="954" y="624" width="1" height="18" fill="#000" />
<rect x="997" y="624" width="1" height="18" fill="#000" />
<rect x="1040" y="624" width="1" height="18" fill="#000" />
<rect x="1083" y="624" width="1" height="18" fill="#000" />
<rect x="1126" y="624" width="1" height="18" fill="#000" />
<rect x="1083" y="641" width="1" height="18" fill="#000" />
<rect x="1310" y="123" width="4" height="1" fill="#000" />
<rect x="1310" y="127" width="4" height="1" fill="#000" />
<rect x="1310" y="130" width="4" height="1" fill="#000" />
<rect x="1310" y="134" width="4" height="1" fill="#000" />
<rect x="1310" y="137" width="7" height="1" fill="#000" />
<rect x="1310" y="141" width="4" height="1" fill="#000" />
<rect x="1310" y="144" width="4" height="1" fill="#000" />
<rect x="1310" y="148" width="4" height="1" fill="#000" />
<rect x="1310" y="152" width="4" height="1" fill="#000" />
<rect x="1310" y="155" width="7" height="1" fill="#000" />
<rect x="1310" y="159" width="4" height="1" fill="#000" />
<rect x="1310" y="162" width="4" height="1" fill="#000" />
<rect x="1310" y="166" width="4" height="1" fill="#000" />
<rect x="1310" y="169" width="4" height="1" fill="#000" />
<rect x="1310" y="173" width="7" height="1" fill="#000" />
<rect x="1310" y="176" width="4" height="1" fill="#000" />
<rect x="1310" y="180" width="4" height="1" fill="#000" />
<rect x="1310" y="183" width="4" height="1" fill="#000" />
<rect x="1310" y="187" width="4" height="1" fill="#000" />
<rect x="1310" y="191" width="7" height="1" fill="#000" />
<rect x="1310" y="194" width="4" height="1" fill="#000" />
<rect x="1310" y="198" width="4" height="1" fill="#000" />
<rect x="1310" y="201" width="4" height="1" fill="#000" />
<rect x="1310" y="205" width="4" height="1" fill="#000" />
<rect x="1310" y="208" width="7" height="1" fill="#000" />
<rect x="1310" y="212" width="4" height="1" fill="#000" />
<rect x="1310" y="215" width="4" height="1" fill="#000" />
<rect x="1310" y="219" width="4" height="1" fill="#000" />
<rect x="1310" y="222" width="4" height="1" fill="#000" />
<rect x="1310" y="226" width="7" height="1" fill="#000" />
<rect x="1310" y="230" width="4" height="1" fill="#000" />
<rect x="1310" y="233" width="4" height="1" fill="#000" />
<rect x="1310" y="237" width="4" height="1" fill="#000" />
<rect x="1310" y="240" width="4" height="1" fill="#000" />
<rect x="1310" y="244" width="7" height="1" fill="#000" />
<rect x="1310" y="247" width="4" height="1" fill="#000" />
<rect x="1310" y="251" width="4" height="1" fill="#000" />
<rect x="1310" y="254" width="4" height="1" fill="#000" />
<rect x="1310" y="258" width="4" height="1" fill="#000" />
<rect x="1310" y="261" width="7" height="1" fill="#000" />
<rect x="1310" y="265" width="4" height="1" fill="#000" />
<rect x="1310" y="268" width="4" height="1" fill="#000" />
<rect x="1310" y="272" width="4" height="1" fill="#000" />
<rect x="1310" y="276" width="4" height="1" fill="#000" />
<rect x="1310" y="279" width="7" height="1" fill="#000" />
<rect x="1310" y="283" width="4" height="1" fill="#000" />
<rect x="1310" y="286" width="4" height="1" fill="#000" />
<rect x="1310" y="290" width="4" height="1" fill="#000" />
<rect x="1310" y="293" width="4" height="1" fill="#000" />
<rect x="1310" y="297" width="7" height="1" fill="#000" />
<rect x="1310" y="300" width="4" height="1" fill="#000" />
<rect x="1310" y="304" width="4" height="1" fill="#000" />
<rect x="1310" y="307" width="4" height="1" fill="#000" />
<rect x="1310" y="311" width="4" height="1" fill="#000" />
<rect x="1310" y="315" width="7" height="1" fill="#000" />
<rect x="1310" y="318" width="4" height="1" fill="#000" />
<rect x="1310" y="322" width="4" height="1" fill="#000" />
<rect x="1310" y="325" width="4" height="1" fill="#000" />
<rect x="1310" y="329" width="4" height="1" fill="#000" />
<rect x="1310" y="332" width="7" height="1" fill="#000" />
<rect x="1310" y="336" width="4" height="1" fill="#000" />
<rect x="1310" y="339" width="4" height="1" fill="#000" />
<rect x="1310" y="343" width="4" height="1" fill="#000" />
<rect x="1310" y="346" width="4" height="1" fill="#000" />
<rect x="1310" y="350" width="7" height="1" fill="#000" />
<rect x="1310" y="354" width="4" height="1" fill="#000" />
<rect x="1310" y="357" width="4" height="1" fill="#000" />
<rect x="1310" y="361" width="4" height="1" fill="#000" />
<rect x="1310" y="364" width="4" height="1" fill="#000" />
<rect x="1310" y="368" width="7" height="1" fill="#000" />
<rect x="1310" y="371" width="4" height="1" fill="#000" />
<rect x="1310" y="375" width="4" height="1" fill="#000" />
<rect x="1310" y="378" width="4" height="1" fill="#000" />
<rect x="1310" y="382" width="4" height="1" fill="#000" />
<rect x="1310" y="385" width="7" height="1" fill="#000" />
<rect x="1310" y="389" width="4" height="1" fill="#000" />
<rect x="1310" y="392" width="4" height="1" fill="#000" />
<rect x="1310" y="396" width="4" height="1" fill="#000" />
<rect x="1310" y="400" width="4" height="1" fill="#000" />
<rect x="1310" y="403" width="7" height="1" fill="#000" />
<rect x="1310" y="407" width="4" height="1" fill="#000" />
<rect x="1310" y="410" width="4" height="1" fill="#000" />
<rect x="1310" y="414" width="4" height="1" fill="#000" />
<rect x="1310" y="417" width="4" height="1" fill="#000" />
<rect x="1310" y="421" width="7" height="1" fill="#000" />
<rect x="1310" y="424" width="4" height="1" fill="#000" />
<rect x="1310" y="428" width="4" height="1" fill="#000" />
<rect x="1310" y="431" width="4" height="1" fill="#000" />
<rect x="1310" y="435" width="4" height="1" fill="#000" />
<rect x="1310" y="439" width="7" height="1" fill="#000" />
<rect x="1310" y="442" width="4" height="1" fill="#000" />
<rect x="1310" y="446" width="4" height="1" fill="#000" />
<rect x="1310" y="449" width="4" height="1" fill="#000" />
<rect x="1310" y="453" width="4" height="1" fill="#000" />
<rect x="1310" y="456" width="7" height="1" fill="#000" />
<rect x="1310" y="460" width="4" height="1" fill="#000" />
<rect x="1310" y="463" width="4" height="1" fill="#000" />
<rect x="1310" y="467" width="4" height="1" fill="#000" />
<rect x="1310" y="470" width="4" height="1" fill="#000" />
<rect x="1310" y="474" width="7" height="1" fill="#000" />
<rect x="1310" y="478" width="4" height="1" fill="#000" />
<rect x="1310" y="481" width="4" height="1" fill="#000" />
<rect x="1310" y="485" width="4" height="1" fill="#000" />
<rect x="1310" y="488" width="4" height="1" fill="#000" />
<rect x="1310" y="492" width="7" height="1" fill="#000" />
<rect x="1310" y="495" width="4" height="1" fill="#000" />
<rect x="1310" y="499" width="4" height="1" fill="#000" />
<rect x="1310" y="502" width="4" height="1" fill="#000" />
<rect x="1310" y="506" width="4" height="1" fill="#000" />
<rect x="1310" y="509" width="7" height="1" fill="#000" />
<rect x="1310" y="513" width="4" height="1" fill="#000" />
<rect x="1310" y="517" width="4" height="1" fill="#000" />
<rect x="1310" y="520" width="4" height="1" fill="#000" />
<rect x="1310" y="524" width="4" height="1" fill="#000" />
<rect x="1310" y="527" width="7" height="1" fill="#000" />
<rect x="1310" y="531" width="4" height="1" fill="#000" />
<rect x="1310" y="534" width="4" height="1" fill="#000" />
<rect x="1310" y="538" width="4" height="1" fill="#000" />
<rect x="1310" y="541" width="4" height="1" fill="#000" />
<rect x="1310" y="545" width="7" height="1" fill="#000" />
<rect x="1310" y="548" width="4" height="1" fill="#000" />
<rect x="1310" y="552" width="4" height="1" fill="#000" />
<rect x="1310" y="555" width="4" height="1" fill="#000" />
<rect x="1310" y="559" width="4" height="1" fill="#000" />
<rect x="1310" y="563" width="7" height="1" fill="#000" />
<rect x="1310" y="566" width="4" height="1" fill="#000" />
<rect x="1310" y="570" width="4" height="1" fill="#000" />
<rect x="1310" y="573" width="4" height="1" fill="#000" />
<rect x="1310" y="577" width="4" height="1" fill="#000" />
<rect x="1310" y="580" width="7" height="1" fill="#000" />
<rect x="1310" y="584" width="4" height="1" fill="#000" />
<rect x="1310" y="587" width="4" height="1" fill="#000" />
<rect x="1310" y="591" width="4" height="1" fill="#000" />
<rect x="1310" y="594" width="4" height="1" fill="#000" />
<rect x="1310" y="598" width="7" height="1" fill="#000" />
<rect x="1310" y="602" width="4" height="1" fill="#000" />
<rect x="1310" y="605" width="4" height="1" fill="#000" />
<rect x="1310" y="609" width="4" height="1" fill="#000" />
<rect x="1310" y="612" width="4" height="1" fill="#000" />
</g>
<clipPath id="cax3"><rect x="1310" y="112" width="39" height="550"/></clipPath>
<g clip-path="url(#cax3)">
<text x="1318" y="142.3" font-size="12" fill="#000" font-family='"Liberation Sans", sans-serif' textLength="39" lengthAdjust="spacingAndGlyphs" >130 500</text>
<text x="1318" y="160.015" font-size="12" fill="#000" font-family='"Liberation Sans", sans-serif' textLength="39" lengthAdjust="spacingAndGlyphs" >130 000</text>
<text x="1318" y="177.73" font-size="12" fill="#000" font-family='"Liberation Sans", sans-serif' textLength="39" lengthAdjust="spacingAndGlyphs" >129 500</text>
<text x="1318" y="195.445" font-size="12" fill="#000" font-family='"Liberation Sans", sans-serif' textLength="39" lengthAdjust="spacingAndGlyphs" >129 000</text>
<text x="1318" y="213.16" font-size="12" fill="#000" font-family='"Liberation Sans", sans-serif' textLength="39" lengthAdjust="spacingAndGlyphs" >128 500</text>
<text x="1318" y="230.875" font-size="12" fill="#000" font-family='"Liberation Sans", sans-serif' textLength="39" lengthAdjust="spacingAndGlyphs" >128 000</text>
<text x="1318" y="248.59" font-size="12" fill="#000" font-family='"Liberation Sans", sans-serif' textLength="39" lengthAdjust="spacingAndGlyphs" >127 500</text>
<text x="1318" y="266.305" font-size="12" fill="#000" font-family='"Liberation Sans", sans-serif' textLength="39" lengthAdjust="spacingAndGlyphs" >127 000</text>
<text x="1318" y="284.02" font-size="12" fill="#000" font-family='"Liberation Sans", sans-serif' textLength="39" lengthAdjust="spacingAndGlyphs" >126 500</text>
<text x="1318" y="301.735" font-size="12" fill="#000" font-family='"Liberation Sans", sans-serif' textLength="39" lengthAdjust="spacingAndGlyphs" >126 000</text>
<text x="1318" y="319.45" font-size="12" fill="#000" font-family='"Liberation Sans", sans-serif' textLength="39" lengthAdjust="spacingAndGlyphs" >125 500</text>
<text x="1318" y="337.165" font-size="12" fill="#000" font-family='"Liberation Sans", sans-serif' textLength="39" lengthAdjust="spacingAndGlyphs" >125 000</text>
<text x="1318" y="354.88" font-size="12" fill="#000" font-family='"Liberation Sans", sans-serif' textLength="39" lengthAdjust="spacingAndGlyphs" >124 500</text>
<text x="1318" y="372.595" font-size="12" fill="#000" font-family='"Liberation Sans", sans-serif' textLength="39" lengthAdjust="spacingAndGlyphs" >124 000</text>
<text x="1318" y="390.31" font-size="12" fill="#000" font-family='"Liberation Sans", sans-serif' textLength="39" lengthAdjust="spacingAndGlyphs" >123 500</text>
<text x="1318" y="408.025" font-size="12" fill="#000" font-family='"Liberation Sans", sans-serif' textLength="39" lengthAdjust="spacingAndGlyphs" >123 000</text>
<text x="1318" y="425.74" font-size="12" fill="#000" font-family='"Liberation Sans", sans-serif' textLength="39" lengthAdjust="spacingAndGlyphs" >122 500</text>
<text x="1318" y="443.455" font-size="12" fill="#000" font-family='"Liberation Sans", sans-serif' textLength="39" lengthAdjust="spacingAndGlyphs" >122 000</text>
<text x="1318" y="461.17" font-size="12" fill="#000" font-family='"Liberation Sans", sans-serif' textLength="39" lengthAdjust="spacingAndGlyphs" >121 500</text>
<text x="1318" y="478.885" font-size="12" fill="#000" font-family='"Liberation Sans", sans-serif' textLength="39" lengthAdjust="spacingAndGlyphs" >121 000</text>
<text x="1318" y="496.6" font-size="12" fill="#000" font-family='"Liberation Sans", sans-serif' textLength="39" lengthAdjust="spacingAndGlyphs" >120 500</text>
<text x="1318" y="514.315" font-size="12" fill="#000" font-family='"Liberation Sans", sans-serif' textLength="39" lengthAdjust="spacingAndGlyphs" >120 000</text>
<text x="1318" y="532.03" font-size="12" fill="#000" font-family='"Liberation Sans", sans-serif' textLength="39" lengthAdjust="spacingAndGlyphs" >119 500</text>
<text x="1318" y="549.745" font-size="12" fill="#000" font-family='"Liberation Sans", sans-serif' textLength="39" lengthAdjust="spacingAndGlyphs" >119 000</text>
<text x="1318" y="567.46" font-size="12" fill="#000" font-family='"Liberation Sans", sans-serif' textLength="39" lengthAdjust="spacingAndGlyphs" >118 500</text>
<text x="1318" y="585.175" font-size="12" fill="#000" font-family='"Liberation Sans", sans-serif' textLength="39" lengthAdjust="spacingAndGlyphs" >118 000</text>
<text x="1318" y="602.89" font-size="12" fill="#000" font-family='"Liberation Sans", sans-serif' textLength="39" lengthAdjust="spacingAndGlyphs" >117 500</text>
<rect x="1315" y="179" width="40" height="16" fill="#000" />
<rect x="1316" y="180" width="40" height="14" fill="#d7d7d7" />
<text x="1318" y="191" font-size="12" fill="#000" font-family='"Liberation Sans", sans-serif' textLength="39" lengthAdjust="spacingAndGlyphs" >129 130</text>
<rect x="1317" y="227" width="40" height="15" fill="#f87f7f" />
<text x="1318" y="238.1" font-size="12" fill="#000" font-family='"Liberation Sans", sans-serif' textLength="36" lengthAdjust="spacingAndGlyphs" >127774</text>
<rect x="1317" y="260" width="40" height="15" fill="#f87f7f" />
<text x="1318" y="271.4" font-size="12" fill="#000" font-family='"Liberation Sans", sans-serif' textLength="36" lengthAdjust="spacingAndGlyphs" >126845</text>
<rect x="1317" y="331" width="40" height="15" fill="#f87f7f" />
<text x="1318" y="342.6" font-size="12" fill="#000" font-family='"Liberation Sans", sans-serif' textLength="36" lengthAdjust="spacingAndGlyphs" >124842</text>
<rect x="1317" y="409" width="40" height="15" fill="#f87f7f" />
<text x="1318" y="420.3" font-size="12" fill="#000" font-family='"Liberation Sans", sans-serif' textLength="36" lengthAdjust="spacingAndGlyphs" >122620</text>
</g>
<text x="698.5" y="637" font-size="12" fill="#000" font-family='"Liberation Sans", sans-serif' textLength="6" lengthAdjust="spacingAndGlyphs" >8</text>
<text x="741.5" y="637" font-size="12" fill="#000" font-family='"Liberation Sans", sans-serif' textLength="12" lengthAdjust="spacingAndGlyphs" >10</text>
<text x="785.5" y="637" font-size="12" fill="#000" font-family='"Liberation Sans", sans-serif' textLength="12" lengthAdjust="spacingAndGlyphs" >14</text>
<text x="828.5" y="637" font-size="12" fill="#000" font-family='"Liberation Sans", sans-serif' textLength="12" lengthAdjust="spacingAndGlyphs" >16</text>
<text x="871.5" y="637" font-size="12" fill="#000" font-family='"Liberation Sans", sans-serif' textLength="12" lengthAdjust="spacingAndGlyphs" >20</text>
<text x="914.5" y="637" font-size="12" fill="#000" font-family='"Liberation Sans", sans-serif' textLength="12" lengthAdjust="spacingAndGlyphs" >22</text>
<text x="958.5" y="637" font-size="12" fill="#000" font-family='"Liberation Sans", sans-serif' textLength="12" lengthAdjust="spacingAndGlyphs" >24</text>
<text x="1001.5" y="637" font-size="12" fill="#000" font-family='"Liberation Sans", sans-serif' textLength="12" lengthAdjust="spacingAndGlyphs" >28</text>
<text x="1044.5" y="637" font-size="12" fill="#000" font-family='"Liberation Sans", sans-serif' textLength="12" lengthAdjust="spacingAndGlyphs" >30</text>
<text x="1087.5" y="637" font-size="12" fill="#000" font-family='"Liberation Sans", sans-serif' textLength="6" lengthAdjust="spacingAndGlyphs" >3</text>
<text x="1130.5" y="637" font-size="12" fill="#000" font-family='"Liberation Sans", sans-serif' textLength="6" lengthAdjust="spacingAndGlyphs" >5</text>
<text x="1087" y="654" font-size="12" fill="#000" font-family='"Liberation Sans", sans-serif' textLength="20" lengthAdjust="spacingAndGlyphs" >Aug</text>
<rect x="1349" y="81" width="17" height="584" fill="#f0f0f0" />
<rect x="1350" y="109" width="16" height="524" fill="#cdcdcd" />
<path d="M1353.5 93 L1357.5 89 L1361.5 93" fill="none" stroke="#505050" stroke-width="1.8"/>
<path d="M1353.5 653.5 L1357.5 657.5 L1361.5 653.5" fill="none" stroke="#505050" stroke-width="1.8"/>
<path d="M0.5 665 V373 Q0.5 367.5 6 367.5 H677 Q682.5 367.5 682.5 373 V665 Z" fill="#b7d1ec" stroke="#2b2f36" stroke-width="1"/>
<path d="M1.5 399 V373.5 Q1.5 368.5 6.5 368.5 H676.5 Q681.5 368.5 681.5 373.5 V399 Z" fill="url(#gAct)"/>
<path d="M1.5 399 V373.5 Q1.5 368.5 6.5 368.5 H676.5 Q681.5 368.5 681.5 373.5 V399 Z" fill="url(#gActGlow)"/>
<path d="M1.5 378 V373.5 Q1.5 368.8 6.5 368.8 H676.5 Q681.5 368.8 681.5 373.5" fill="none" stroke="#f4f9fe" stroke-width="1"/>
<rect x="675" y="398" width="7" height="266" fill="url(#gActR)" />
<rect x="1" y="398" width="7" height="266" fill="#b9d2ed" />
<rect x="1" y="657" width="681" height="6" fill="#b4d2ef" />
<rect x="1" y="662.5" width="681" height="1.5" fill="#74c4ec" />
<rect x="0" y="664" width="683" height="1" fill="#e9eef2" />
<rect x="8" y="398" width="667" height="245" fill="#d7d7d7" />
<rect x="8" y="398" width="667" height="1" fill="#e4e7ec" />
<g transform="translate(10,379)" shape-rendering="crispEdges"><rect x="0" y="0" width="15" height="13" fill="#8fb0cf"/><rect x="1" y="1" width="13" height="11" fill="#fff"/><rect x="0" y="0" width="15" height="2" fill="#5a9bc4"/><path d="M2 5.5 h3 l1.2 -1.2 l1.6 2 l1.2 -1 h3.2" fill="none" stroke="#c82828" stroke-width="1" shape-rendering="auto"/><rect x="1" y="10" width="13" height="2" fill="#a9cdea"/><rect x="2" y="8" width="1" height="4" fill="#2f66a8"/><rect x="4" y="10" width="1" height="2" fill="#2f66a8"/><rect x="6" y="9" width="1" height="3" fill="#2f66a8"/><rect x="8" y="10" width="1" height="2" fill="#2f66a8"/><rect x="10" y="9" width="1" height="3" fill="#2f66a8"/><rect x="12" y="8" width="1" height="4" fill="#2f66a8"/></g>
<text x="30" y="391" font-size="12" fill="#000" font-family='"Liberation Sans", sans-serif' textLength="233" lengthAdjust="spacingAndGlyphs" >RIU0 График цены и объёма #5 - [5 минут]</text>
<rect x="574.0" y="378.0" width="30" height="16" rx="2.5" fill="url(#gBtnA)" stroke="#586a82"/>
<rect x="575.0" y="379.0" width="28" height="14" rx="1.5" fill="none" stroke="#fff" stroke-opacity="0.45"/>
<rect x="583.5" y="385.5" width="10" height="3.5" rx=".8" fill="#fff" stroke="#4a5566" stroke-width="1"/>
<rect x="608.0" y="378.0" width="30" height="16" rx="2.5" fill="url(#gBtnA)" stroke="#586a82"/>
<rect x="609.0" y="379.0" width="28" height="14" rx="1.5" fill="none" stroke="#fff" stroke-opacity="0.45"/>
<rect x="618.0" y="381.5" width="10" height="8" rx=".8" fill="#fff" stroke="#4a5566" stroke-width="1"/><rect x="621.0" y="384.5" width="4" height="2.5" fill="#a9c4e2" stroke="#4a5566" stroke-width="1"/>
<rect x="642.0" y="378.0" width="30" height="16" rx="2.5" fill="url(#gBtnX)" stroke="#5e2a22"/>
<rect x="643.0" y="379.0" width="28" height="14" rx="1.5" fill="none" stroke="#fff" stroke-opacity="0.45"/>
<path d="M652.6 382.4 L661.4 388.8 M661.4 382.4 L652.6 388.8" stroke="#4a5566" stroke-width="4.2" stroke-linecap="butt"/><path d="M653.1 382.8 L660.9 388.4 M660.9 382.8 L653.1 388.4" stroke="#fff" stroke-width="2.4" stroke-linecap="butt"/>
<rect x="8" y="643" width="667" height="14" fill="#f0f0f0" />
<rect x="411" y="645" width="247" height="11" fill="#cdcdcd" />
<path d="M18.5 646.5 L14.5 650.5 L18.5 654.5" fill="none" stroke="#505050" stroke-width="1.8"/>
<path d="M665 646.5 L669 650.5 L665 654.5" fill="none" stroke="#505050" stroke-width="1.8"/>
<rect x="662" y="406" width="13" height="193" fill="#f0f0f0" />
<rect x="663" y="423" width="12" height="121" fill="#cdcdcd" />
<path d="M665 416.5 L668.7 412.5 L672.4 416.5" fill="none" stroke="#505050" stroke-width="1.8"/>
<path d="M665 588.5 L668.7 592.5 L672.4 588.5" fill="none" stroke="#505050" stroke-width="1.8"/>
<rect x="496" y="478" width="117" height="4" fill="#f3ee3c" shape-rendering="crispEdges"/>
<clipPath id="cp2"><rect x="9" y="406" width="604" height="194"/></clipPath>
<g clip-path="url(#cp2)">
<g shape-rendering="crispEdges">
<rect x="21" y="593" width="1" height="7" fill="#000" />
<rect x="26" y="598" width="1" height="2" fill="#000" />
<rect x="36" y="590" width="1" height="10" fill="#000" />
<rect x="41" y="594" width="1" height="6" fill="#000" />
<rect x="47" y="578" width="1" height="22" fill="#000" />
<rect x="46" y="578" width="3" height="23" fill="#000" />
<rect x="47" y="579" width="1" height="21" fill="#d7d7d7" />
<rect x="52" y="568" width="1" height="23" fill="#000" />
<rect x="51" y="579" width="3" height="12" fill="#000" />
<rect x="57" y="586" width="1" height="14" fill="#000" />
<rect x="56" y="588" width="3" height="12" fill="#000" />
<rect x="62" y="595" width="1" height="5" fill="#000" />
<rect x="67" y="597" width="1" height="3" fill="#000" />
<rect x="72" y="596" width="1" height="4" fill="#000" />
<rect x="71" y="596" width="3" height="5" fill="#000" />
<rect x="72" y="597" width="1" height="3" fill="#d7d7d7" />
<rect x="77" y="578" width="1" height="18" fill="#000" />
<rect x="76" y="580" width="3" height="16" fill="#000" />
<rect x="77" y="581" width="1" height="14" fill="#d7d7d7" />
<rect x="82" y="551" width="1" height="30" fill="#000" />
<rect x="81" y="552" width="3" height="29" fill="#000" />
<rect x="82" y="553" width="1" height="27" fill="#d7d7d7" />
<rect x="87" y="548" width="1" height="16" fill="#000" />
<rect x="86" y="552" width="3" height="12" fill="#000" />
<rect x="92" y="553" width="1" height="17" fill="#000" />
<rect x="91" y="553" width="3" height="9" fill="#000" />
<rect x="92" y="554" width="1" height="7" fill="#d7d7d7" />
<rect x="97" y="550" width="1" height="18" fill="#000" />
<rect x="96" y="554" width="3" height="14" fill="#000" />
<rect x="102" y="560" width="1" height="16" fill="#000" />
<rect x="101" y="567" width="3" height="4" fill="#000" />
<rect x="107" y="557" width="1" height="32" fill="#000" />
<rect x="106" y="569" width="3" height="16" fill="#000" />
<rect x="112" y="578" width="1" height="22" fill="#000" />
<rect x="111" y="584" width="3" height="16" fill="#000" />
<rect x="117" y="592" width="1" height="8" fill="#000" />
<rect x="123" y="588" width="1" height="12" fill="#000" />
<rect x="122" y="590" width="3" height="11" fill="#000" />
<rect x="123" y="591" width="1" height="9" fill="#d7d7d7" />
<rect x="128" y="588" width="1" height="10" fill="#000" />
<rect x="127" y="590" width="3" height="3" fill="#000" />
<rect x="133" y="571" width="1" height="21" fill="#000" />
<rect x="132" y="574" width="3" height="18" fill="#000" />
<rect x="133" y="575" width="1" height="16" fill="#d7d7d7" />
<rect x="138" y="546" width="1" height="28" fill="#000" />
<rect x="137" y="546" width="3" height="28" fill="#000" />
<rect x="138" y="547" width="1" height="26" fill="#d7d7d7" />
<rect x="143" y="524" width="1" height="22" fill="#000" />
<rect x="142" y="532" width="3" height="14" fill="#000" />
<rect x="143" y="533" width="1" height="12" fill="#d7d7d7" />
<rect x="148" y="526" width="1" height="16" fill="#000" />
<rect x="147" y="530" width="3" height="10" fill="#000" />
<rect x="153" y="528" width="1" height="18" fill="#000" />
<rect x="152" y="540" width="3" height="1" fill="#000" />
<rect x="158" y="538" width="1" height="22" fill="#000" />
<rect x="157" y="539" width="3" height="14" fill="#000" />
<rect x="163" y="553" width="1" height="9" fill="#000" />
<rect x="162" y="553" width="3" height="8" fill="#000" />
<rect x="168" y="547" width="1" height="13" fill="#000" />
<rect x="167" y="550" width="3" height="10" fill="#000" />
<rect x="168" y="551" width="1" height="8" fill="#d7d7d7" />
<rect x="173" y="542" width="1" height="24" fill="#000" />
<rect x="172" y="549" width="3" height="8" fill="#000" />
<rect x="178" y="554" width="1" height="14" fill="#000" />
<rect x="177" y="556" width="3" height="12" fill="#000" />
<rect x="183" y="564" width="1" height="7" fill="#000" />
<rect x="182" y="566" width="3" height="2" fill="#000" />
<rect x="188" y="564" width="1" height="12" fill="#000" />
<rect x="187" y="570" width="3" height="1" fill="#000" />
<rect x="193" y="561" width="1" height="12" fill="#000" />
<rect x="192" y="563" width="3" height="8" fill="#000" />
<rect x="193" y="564" width="1" height="6" fill="#d7d7d7" />
<rect x="199" y="540" width="1" height="25" fill="#000" />
<rect x="198" y="542" width="3" height="23" fill="#000" />
<rect x="199" y="543" width="1" height="21" fill="#d7d7d7" />
<rect x="204" y="543" width="1" height="17" fill="#000" />
<rect x="203" y="543" width="3" height="15" fill="#000" />
<rect x="209" y="549" width="1" height="11" fill="#000" />
<rect x="208" y="554" width="3" height="6" fill="#000" />
<rect x="209" y="555" width="1" height="4" fill="#d7d7d7" />
<rect x="214" y="546" width="1" height="10" fill="#000" />
<rect x="213" y="552" width="3" height="2" fill="#000" />
<rect x="219" y="533" width="1" height="30" fill="#000" />
<rect x="218" y="537" width="3" height="16" fill="#000" />
<rect x="219" y="538" width="1" height="14" fill="#d7d7d7" />
<rect x="224" y="531" width="1" height="11" fill="#000" />
<rect x="223" y="534" width="3" height="4" fill="#000" />
<rect x="224" y="535" width="1" height="2" fill="#d7d7d7" />
<rect x="229" y="517" width="1" height="18" fill="#000" />
<rect x="228" y="521" width="3" height="14" fill="#000" />
<rect x="229" y="522" width="1" height="12" fill="#d7d7d7" />
<rect x="234" y="500" width="1" height="27" fill="#000" />
<rect x="233" y="500" width="3" height="22" fill="#000" />
<rect x="234" y="501" width="1" height="20" fill="#d7d7d7" />
<rect x="239" y="489" width="1" height="14" fill="#000" />
<rect x="238" y="500" width="3" height="2" fill="#000" />
<rect x="244" y="495" width="1" height="20" fill="#000" />
<rect x="243" y="500" width="3" height="1" fill="#000" />
<rect x="249" y="487" width="1" height="18" fill="#000" />
<rect x="248" y="500" width="3" height="5" fill="#000" />
<rect x="254" y="502" width="1" height="7" fill="#000" />
<rect x="253" y="502" width="3" height="7" fill="#000" />
<rect x="259" y="498" width="1" height="14" fill="#000" />
<rect x="258" y="498" width="3" height="12" fill="#000" />
<rect x="259" y="499" width="1" height="10" fill="#d7d7d7" />
<rect x="264" y="482" width="1" height="22" fill="#000" />
<rect x="263" y="493" width="3" height="7" fill="#000" />
<rect x="264" y="494" width="1" height="5" fill="#d7d7d7" />
<rect x="269" y="480" width="1" height="18" fill="#000" />
<rect x="268" y="480" width="3" height="14" fill="#000" />
<rect x="269" y="481" width="1" height="12" fill="#d7d7d7" />
<rect x="275" y="480" width="1" height="20" fill="#000" />
<rect x="274" y="480" width="3" height="16" fill="#000" />
<rect x="280" y="484" width="1" height="10" fill="#000" />
<rect x="279" y="487" width="3" height="7" fill="#000" />
<rect x="280" y="488" width="1" height="5" fill="#d7d7d7" />
<rect x="285" y="474" width="1" height="19" fill="#000" />
<rect x="284" y="487" width="3" height="6" fill="#000" />
<rect x="290" y="492" width="1" height="30" fill="#000" />
<rect x="289" y="492" width="3" height="24" fill="#000" />
<rect x="295" y="513" width="1" height="12" fill="#000" />
<rect x="294" y="515" width="3" height="10" fill="#000" />
<rect x="300" y="511" width="1" height="15" fill="#000" />
<rect x="299" y="511" width="3" height="15" fill="#000" />
<rect x="300" y="512" width="1" height="13" fill="#d7d7d7" />
<rect x="305" y="495" width="1" height="27" fill="#000" />
<rect x="304" y="511" width="3" height="11" fill="#000" />
<rect x="310" y="521" width="1" height="23" fill="#000" />
<rect x="309" y="521" width="3" height="17" fill="#000" />
<rect x="315" y="529" width="1" height="13" fill="#000" />
<rect x="314" y="529" width="3" height="10" fill="#000" />
<rect x="315" y="530" width="1" height="8" fill="#d7d7d7" />
<rect x="320" y="523" width="1" height="11" fill="#000" />
<rect x="319" y="528" width="3" height="2" fill="#000" />
<rect x="325" y="519" width="1" height="20" fill="#000" />
<rect x="324" y="528" width="3" height="6" fill="#000" />
<rect x="330" y="522" width="1" height="12" fill="#000" />
<rect x="329" y="527" width="3" height="6" fill="#000" />
<rect x="330" y="528" width="1" height="4" fill="#d7d7d7" />
<rect x="335" y="521" width="1" height="17" fill="#000" />
<rect x="334" y="526" width="3" height="3" fill="#000" />
<rect x="340" y="518" width="1" height="16" fill="#000" />
<rect x="339" y="528" width="3" height="1" fill="#000" />
<rect x="345" y="521" width="1" height="10" fill="#000" />
<rect x="344" y="527" width="3" height="1" fill="#000" />
<rect x="351" y="518" width="1" height="15" fill="#000" />
<rect x="350" y="525" width="3" height="3" fill="#000" />
<rect x="351" y="526" width="1" height="1" fill="#d7d7d7" />
<rect x="356" y="521" width="1" height="11" fill="#000" />
<rect x="355" y="523" width="3" height="6" fill="#000" />
<rect x="361" y="530" width="1" height="23" fill="#000" />
<rect x="360" y="530" width="3" height="20" fill="#000" />
<rect x="366" y="534" width="1" height="19" fill="#000" />
<rect x="365" y="539" width="3" height="11" fill="#000" />
<rect x="366" y="540" width="1" height="9" fill="#d7d7d7" />
<rect x="371" y="524" width="1" height="15" fill="#000" />
<rect x="370" y="524" width="3" height="15" fill="#000" />
<rect x="371" y="525" width="1" height="13" fill="#d7d7d7" />
<rect x="376" y="512" width="1" height="16" fill="#000" />
<rect x="375" y="524" width="3" height="2" fill="#000" />
<rect x="381" y="514" width="1" height="13" fill="#000" />
<rect x="380" y="514" width="3" height="11" fill="#000" />
<rect x="381" y="515" width="1" height="9" fill="#d7d7d7" />
<rect x="386" y="490" width="1" height="30" fill="#000" />
<rect x="385" y="490" width="3" height="24" fill="#000" />
<rect x="386" y="491" width="1" height="22" fill="#d7d7d7" />
<rect x="391" y="489" width="1" height="18" fill="#000" />
<rect x="390" y="492" width="3" height="8" fill="#000" />
<rect x="396" y="492" width="1" height="30" fill="#000" />
<rect x="395" y="499" width="3" height="18" fill="#000" />
<rect x="401" y="505" width="1" height="11" fill="#000" />
<rect x="400" y="507" width="3" height="9" fill="#000" />
<rect x="401" y="508" width="1" height="7" fill="#d7d7d7" />
<rect x="406" y="505" width="1" height="11" fill="#000" />
<rect x="405" y="508" width="3" height="8" fill="#000" />
<rect x="411" y="501" width="1" height="18" fill="#000" />
<rect x="410" y="506" width="3" height="12" fill="#000" />
<rect x="411" y="507" width="1" height="10" fill="#d7d7d7" />
<rect x="416" y="488" width="1" height="18" fill="#000" />
<rect x="415" y="488" width="3" height="18" fill="#000" />
<rect x="416" y="489" width="1" height="16" fill="#d7d7d7" />
<rect x="421" y="485" width="1" height="10" fill="#000" />
<rect x="420" y="488" width="3" height="7" fill="#000" />
<rect x="427" y="491" width="1" height="12" fill="#000" />
<rect x="426" y="493" width="3" height="1" fill="#000" />
<rect x="432" y="487" width="1" height="25" fill="#000" />
<rect x="431" y="490" width="3" height="18" fill="#000" />
<rect x="437" y="486" width="1" height="27" fill="#000" />
<rect x="436" y="486" width="3" height="22" fill="#000" />
<rect x="437" y="487" width="1" height="20" fill="#d7d7d7" />
<rect x="442" y="477" width="1" height="9" fill="#000" />
<rect x="441" y="477" width="3" height="9" fill="#000" />
<rect x="442" y="478" width="1" height="7" fill="#d7d7d7" />
<rect x="447" y="475" width="1" height="19" fill="#000" />
<rect x="446" y="477" width="3" height="13" fill="#000" />
<rect x="452" y="488" width="1" height="9" fill="#000" />
<rect x="451" y="489" width="3" height="2" fill="#000" />
<rect x="457" y="468" width="1" height="25" fill="#000" />
<rect x="456" y="478" width="3" height="14" fill="#000" />
<rect x="457" y="479" width="1" height="12" fill="#d7d7d7" />
<rect x="462" y="469" width="1" height="12" fill="#000" />
<rect x="461" y="474" width="3" height="4" fill="#000" />
<rect x="462" y="475" width="1" height="2" fill="#d7d7d7" />
<rect x="467" y="462" width="1" height="11" fill="#000" />
<rect x="466" y="464" width="3" height="9" fill="#000" />
<rect x="467" y="465" width="1" height="7" fill="#d7d7d7" />
<rect x="472" y="461" width="1" height="8" fill="#000" />
<rect x="471" y="464" width="3" height="1" fill="#000" />
<rect x="477" y="444" width="1" height="22" fill="#000" />
<rect x="476" y="444" width="3" height="21" fill="#000" />
<rect x="477" y="445" width="1" height="19" fill="#d7d7d7" />
<rect x="482" y="429" width="1" height="16" fill="#000" />
<rect x="481" y="440" width="3" height="5" fill="#000" />
<rect x="482" y="441" width="1" height="3" fill="#d7d7d7" />
<rect x="487" y="436" width="1" height="15" fill="#000" />
<rect x="486" y="439" width="3" height="3" fill="#000" />
<rect x="492" y="436" width="1" height="17" fill="#000" />
<rect x="491" y="441" width="3" height="7" fill="#000" />
<rect x="497" y="442" width="1" height="13" fill="#000" />
<rect x="496" y="446" width="3" height="1" fill="#000" />
<rect x="503" y="443" width="1" height="26" fill="#000" />
<rect x="502" y="453" width="3" height="5" fill="#000" />
<rect x="508" y="452" width="1" height="19" fill="#000" />
<rect x="507" y="458" width="3" height="4" fill="#000" />
<rect x="508" y="459" width="1" height="2" fill="#d7d7d7" />
<rect x="513" y="456" width="1" height="12" fill="#000" />
<rect x="512" y="459" width="3" height="9" fill="#000" />
<rect x="518" y="468" width="1" height="9" fill="#000" />
<rect x="517" y="468" width="3" height="5" fill="#000" />
<rect x="523" y="472" width="1" height="4" fill="#000" />
<rect x="522" y="473" width="3" height="1" fill="#000" />
<rect x="528" y="465" width="1" height="13" fill="#000" />
<rect x="527" y="467" width="3" height="6" fill="#000" />
<rect x="528" y="468" width="1" height="4" fill="#d7d7d7" />
<rect x="533" y="461" width="1" height="12" fill="#000" />
<rect x="532" y="462" width="3" height="6" fill="#000" />
<rect x="533" y="463" width="1" height="4" fill="#d7d7d7" />
<rect x="538" y="459" width="1" height="8" fill="#000" />
<rect x="537" y="461" width="3" height="3" fill="#000" />
<rect x="538" y="462" width="1" height="1" fill="#d7d7d7" />
<rect x="543" y="454" width="1" height="8" fill="#000" />
<rect x="542" y="460" width="3" height="1" fill="#000" />
<rect x="548" y="460" width="1" height="4" fill="#000" />
<rect x="547" y="460" width="3" height="2" fill="#000" />
<rect x="553" y="458" width="1" height="7" fill="#000" />
<rect x="552" y="461" width="3" height="4" fill="#000" />
<rect x="558" y="463" width="1" height="22" fill="#000" />
<rect x="557" y="463" width="3" height="18" fill="#000" />
<rect x="563" y="474" width="1" height="10" fill="#000" />
<rect x="562" y="480" width="3" height="1" fill="#000" />
<rect x="568" y="479" width="1" height="7" fill="#000" />
<rect x="567" y="480" width="3" height="1" fill="#000" />
<rect x="573" y="474" width="1" height="6" fill="#000" />
<rect x="572" y="478" width="3" height="3" fill="#000" />
<rect x="573" y="479" width="1" height="1" fill="#d7d7d7" />
<rect x="579" y="479" width="1" height="14" fill="#000" />
<rect x="578" y="479" width="3" height="9" fill="#000" />
<rect x="584" y="487" width="1" height="3" fill="#000" />
<rect x="583" y="487" width="3" height="3" fill="#000" />
</g>
</g>
<g stroke="#e3202e" stroke-width="3" fill="none" stroke-linecap="round" stroke-linejoin="round"><path d="M369 553.3 L479.8 433.6"/><path d="M485.2 439 L529 479.5 L545.6 461.7 L577.3 503.8"/></g>
<path d="M570.2 435 H577.6 V451 H580.6 L573.9 467 L567.2 451 H570.2 Z" fill="none" stroke="#1e9ae0" stroke-width="2.7" stroke-linejoin="miter"/>
<g shape-rendering="crispEdges">
<rect x="8" y="405" width="606" height="1" fill="#000" />
<rect x="8" y="405" width="1" height="196" fill="#000" />
<rect x="613" y="405" width="1" height="196" fill="#000" />
<rect x="8" y="600" width="606" height="1" fill="#000" />
<rect x="8" y="608" width="606" height="1" fill="#000" />
<rect x="8" y="625" width="606" height="1" fill="#000" />
<rect x="8" y="642" width="606" height="1" fill="#000" />
<rect x="8" y="608" width="1" height="35" fill="#000" />
<rect x="36" y="608" width="1" height="18" fill="#000" />
<rect x="97" y="608" width="1" height="18" fill="#000" />
<rect x="158" y="608" width="1" height="18" fill="#000" />
<rect x="219" y="608" width="1" height="18" fill="#000" />
<rect x="275" y="608" width="1" height="18" fill="#000" />
<rect x="336" y="608" width="1" height="18" fill="#000" />
<rect x="396" y="608" width="1" height="18" fill="#000" />
<rect x="457" y="608" width="1" height="18" fill="#000" />
<rect x="503" y="608" width="1" height="18" fill="#000" />
<rect x="558" y="608" width="1" height="18" fill="#000" />
<rect x="614" y="413" width="7" height="1" fill="#000" />
<rect x="614" y="422" width="4" height="1" fill="#000" />
<rect x="614" y="431" width="4" height="1" fill="#000" />
<rect x="614" y="439" width="4" height="1" fill="#000" />
<rect x="614" y="448" width="4" height="1" fill="#000" />
<rect x="614" y="457" width="7" height="1" fill="#000" />
<rect x="614" y="465" width="4" height="1" fill="#000" />
<rect x="614" y="474" width="4" height="1" fill="#000" />
<rect x="614" y="483" width="4" height="1" fill="#000" />
<rect x="614" y="491" width="4" height="1" fill="#000" />
<rect x="614" y="500" width="7" height="1" fill="#000" />
<rect x="614" y="509" width="4" height="1" fill="#000" />
<rect x="614" y="517" width="4" height="1" fill="#000" />
<rect x="614" y="526" width="4" height="1" fill="#000" />
<rect x="614" y="535" width="4" height="1" fill="#000" />
<rect x="614" y="544" width="7" height="1" fill="#000" />
<rect x="614" y="552" width="4" height="1" fill="#000" />
<rect x="614" y="561" width="4" height="1" fill="#000" />
<rect x="614" y="570" width="4" height="1" fill="#000" />
<rect x="614" y="578" width="4" height="1" fill="#000" />
<rect x="614" y="587" width="7" height="1" fill="#000" />
<rect x="614" y="596" width="4" height="1" fill="#000" />
</g>
<text x="621.5" y="418.2" font-size="12" fill="#000" font-family='"Liberation Sans", sans-serif' textLength="39" lengthAdjust="spacingAndGlyphs" >130 000</text>
<text x="621.5" y="461.6" font-size="12" fill="#000" font-family='"Liberation Sans", sans-serif' textLength="39" lengthAdjust="spacingAndGlyphs" >129 500</text>
<text x="621.5" y="505" font-size="12" fill="#000" font-family='"Liberation Sans", sans-serif' textLength="39" lengthAdjust="spacingAndGlyphs" >129 000</text>
<text x="621.5" y="548.4" font-size="12" fill="#000" font-family='"Liberation Sans", sans-serif' textLength="39" lengthAdjust="spacingAndGlyphs" >128 500</text>
<text x="621.5" y="591.8" font-size="12" fill="#000" font-family='"Liberation Sans", sans-serif' textLength="39" lengthAdjust="spacingAndGlyphs" >128 000</text>
<rect x="619" y="482" width="44" height="16" fill="#000" shape-rendering="crispEdges"/>
<rect x="620" y="483" width="42" height="14" fill="#d7d7d7" shape-rendering="crispEdges"/>
<text x="622" y="494.2" font-size="12" fill="#000" font-family='"Liberation Sans", sans-serif' textLength="39" lengthAdjust="spacingAndGlyphs" >129 130</text>
<text x="41" y="621.2" font-size="12" fill="#000" font-family='"Liberation Sans", sans-serif' textLength="18" lengthAdjust="spacingAndGlyphs" >11h</text>
<text x="102" y="621.2" font-size="12" fill="#000" font-family='"Liberation Sans", sans-serif' textLength="18" lengthAdjust="spacingAndGlyphs" >12h</text>
<text x="163" y="621.2" font-size="12" fill="#000" font-family='"Liberation Sans", sans-serif' textLength="18" lengthAdjust="spacingAndGlyphs" >13h</text>
<text x="224" y="621.2" font-size="12" fill="#000" font-family='"Liberation Sans", sans-serif' textLength="18" lengthAdjust="spacingAndGlyphs" >14h</text>
<text x="280" y="621.2" font-size="12" fill="#000" font-family='"Liberation Sans", sans-serif' textLength="18" lengthAdjust="spacingAndGlyphs" >15h</text>
<text x="340.5" y="621.2" font-size="12" fill="#000" font-family='"Liberation Sans", sans-serif' textLength="18" lengthAdjust="spacingAndGlyphs" >16h</text>
<text x="400.5" y="621.2" font-size="12" fill="#000" font-family='"Liberation Sans", sans-serif' textLength="18" lengthAdjust="spacingAndGlyphs" >17h</text>
<text x="461.5" y="621.2" font-size="12" fill="#000" font-family='"Liberation Sans", sans-serif' textLength="18" lengthAdjust="spacingAndGlyphs" >18h</text>
<text x="507.5" y="621.2" font-size="12" fill="#000" font-family='"Liberation Sans", sans-serif' textLength="18" lengthAdjust="spacingAndGlyphs" >19h</text>
<text x="563" y="621.2" font-size="12" fill="#000" font-family='"Liberation Sans", sans-serif' textLength="18" lengthAdjust="spacingAndGlyphs" >20h</text>
<rect x="367" y="392" width="216" height="22" fill="#ffffff" />
<text x="371.4" y="407.3" font-size="13" fill="#c0222a" font-family='"DejaVu Sans", "Liberation Sans", sans-serif' textLength="206.6" lengthAdjust="spacingAndGlyphs" >неудавшифся размах и ретест</text>
<rect x="0" y="665" width="1366" height="41" fill="#f0f0f0" />
<rect x="19" y="666" width="1298" height="14" fill="#cdcdcd" />
<path d="M10.5 668.5 L6.5 672.5 L10.5 676.5" fill="none" stroke="#505050" stroke-width="1.8"/>
<path d="M1339 668.5 L1343 672.5 L1339 676.5" fill="none" stroke="#505050" stroke-width="1.8"/>
<g shape-rendering="crispEdges">
<rect x="0" y="705" width="1366" height="1" fill="#d9d9d9" />
<rect x="2" y="683" width="157" height="1" fill="#d9d9d9" />
<rect x="2" y="683" width="1" height="22" fill="#d9d9d9" />
<rect x="100" y="683" width="1" height="22" fill="#d9d9d9" />
<rect x="159" y="681" width="133" height="25" fill="#d9d9d9" />
<rect x="160" y="682" width="131" height="24" fill="#ffffff" />
</g>
<text x="7" y="699.6" font-size="12.5" fill="#000" font-family='"Liberation Sans", sans-serif' textLength="88.5" lengthAdjust="spacingAndGlyphs" >опционы-Учёба</text>
<text x="106" y="699.6" font-size="12.5" fill="#000" font-family='"Liberation Sans", sans-serif' textLength="49.5" lengthAdjust="spacingAndGlyphs" >торговля</text>
<text x="166" y="697.6" font-size="12.5" fill="#000" font-family='"Liberation Sans", sans-serif' textLength="120" lengthAdjust="spacingAndGlyphs" >торговля фьючерсом</text>
<rect x="0" y="706" width="1366" height="22" fill="#f0f0f0" />
<text x="2" y="721.8" font-size="12" fill="#000" font-family='"Liberation Sans", sans-serif' textLength="357" lengthAdjust="spacingAndGlyphs" >Время сервера: 20:25:30; последняя полученная запись: 63250067</text>
<rect x="946" y="708" width="1" height="19" fill="#d5d5d5" shape-rendering="crispEdges"/>
<rect x="1101" y="708" width="1" height="19" fill="#d5d5d5" shape-rendering="crispEdges"/>
<rect x="1190" y="708" width="1" height="19" fill="#d5d5d5" shape-rendering="crispEdges"/>
<rect x="1216" y="708" width="1" height="19" fill="#d5d5d5" shape-rendering="crispEdges"/>
<g transform="translate(951,709)" shape-rendering="crispEdges"><rect x="0" y="1" width="9" height="6" fill="#2e9fc9" stroke="#1b4f63" stroke-width="1"/><rect x="1" y="8" width="8" height="2" fill="#555"/><rect x="1" y="10" width="9" height="5" fill="#dfe6ea" stroke="#444" stroke-width="1"/><rect x="6" y="4" width="9" height="6" fill="#2e9fc9" stroke="#1b4f63" stroke-width="1"/><circle cx="11.5" cy="11" r="3" fill="#fff" stroke="#222" stroke-width="1" shape-rendering="auto"/><path d="M10 11 l1.2 1.4 l2 -2.6" fill="none" stroke="#222" stroke-width="1" shape-rendering="auto"/></g>
<text x="971" y="721.8" font-size="12" fill="#000" font-family='"Liberation Sans", sans-serif' textLength="102" lengthAdjust="spacingAndGlyphs" >91.207.78.204:15100</text>
<rect x="0" y="728" width="1366" height="40" fill="#1b1b1b" />
<rect x="197" y="728" width="48" height="40" fill="#4b4b4b" />
<rect x="197" y="766" width="48" height="2" fill="#7cb9ea" />
<rect x="250" y="766" width="40" height="2" fill="#7cb9ea" />
<rect x="1247" y="728" width="65" height="40" fill="#2e2e2e" />
<g fill="#fff"><path d="M16 742.3 L22.8 741.3 V747.6 H16 Z"/><path d="M23.8 741.2 L32 740 V747.6 H23.8 Z"/><path d="M16 748.6 H22.8 V754.9 L16 753.9 Z"/><path d="M23.8 748.6 H32 V756.2 L23.8 755 Z"/></g>
<g fill="none" stroke="#fff" stroke-width="1.3" shape-rendering="crispEdges"><rect x="66.5" y="744.5" width="9" height="8"/><path d="M64 741.5 H78 M64 755.5 H78"/><path d="M79.5 744 V748 M79.5 750 V753"/><path d="M79.5 741 v1"/></g>
<g><path d="M112 741 q0 -2.5 2 -2.5 h6 l2 2 h11 q1.5 0 1.5 1.5 V756 H112 Z" fill="#e9a823"/><path d="M112 743.5 h22.5 V757 H112 Z" fill="#fbd35a"/><path d="M117 757 v-6.5 h12.5 v6.5 h-3.5 v-3.5 h-5.5 v3.5 z" fill="#3f8fd9"/></g>
<g><path d="M159.5 747 L171.5 737.5 L183.5 747 V758.5 H159.5 Z" fill="#1066b5"/><path d="M161.5 745.5 H181.5 V753 H161.5 Z" fill="#f4f4f4"/><path d="M159.5 746.5 L171.5 753.5 L183.5 746.5 V758.5 H159.5 Z" fill="#2aa3ee"/><path d="M171.5 753.5 L183.5 746.5 V758.5 Z" fill="#1f8ad8"/></g>
<g><circle cx="221" cy="746.5" r="8" fill="none" stroke="#2f8f6d" stroke-width="4.6"/><path d="M222 752 L229.5 750 L229.5 759.5 Z" fill="#2f8f6d"/></g>
<g><rect x="258" y="736.5" width="23.5" height="23" fill="#fdfdfd"/><rect x="258" y="736.5" width="23.5" height="23" fill="none" stroke="#39a0e6" stroke-width="1.4"/><rect x="258" y="745" width="4" height="6" fill="#39a0e6"/><rect x="277.5" y="745" width="4" height="6" fill="#39a0e6"/><path d="M260 747.5 h4 l2 7 l4 -10 l2.5 5 L279.5 738" fill="none" stroke="#1b86d4" stroke-width="1.8"/></g>
<g><path d="M1036.8 743.2 A5.6 5.6 0 1 0 1037 751.6" fill="none" stroke="#d8402b" stroke-width="4.2"/><path d="M1031.5 740.5 l3.2 1.2 l-4.2 7 l-3 -1.6 z" fill="#3f7fd0"/><path d="M1027.3 747 l3.2 1.7 l-3.5 5.8 q-3 .6 -4.4 -2 z" fill="#e8c58e"/></g>
<g><rect x="1048.5" y="740.5" width="14" height="14" fill="#cfd2d2" stroke="#e2e2e2"/><rect x="1050" y="742" width="11" height="7.5" fill="#9aa3a3"/><rect x="1050" y="750.5" width="5" height="2.5" fill="#7d8585"/><rect x="1056" y="750.5" width="5" height="2.5" fill="#7d8585"/><rect x="1055" y="745" width="1.5" height="1.5" fill="#e8f6f6"/></g>
<g><rect x="1072" y="741" width="14" height="14" fill="#3a3d3f"/><path d="M1073.5 748 q6 -6.5 11.5 -1.5 q-5 6.5 -11.5 1.5 z" fill="none" stroke="#76b900" stroke-width="1.5"/><path d="M1076 748 q3 -3 6 -.5 q-2.5 3 -6 .5 z" fill="#76b900"/></g>
<g><rect x="1095" y="740" width="16" height="15.5" fill="#3a98d8"/><rect x="1097.5" y="742.5" width="8" height="5.5" fill="none" stroke="#cfe8f8" stroke-width="1"/><rect x="1101.5" y="746.5" width="7.5" height="5.5" fill="#3a98d8" stroke="#cfe8f8" stroke-width="1"/><path d="M1095 751 L1100 755.5 H1095 Z" fill="#e9a63b"/><path d="M1100 755.5 h11 v-1.5 h-9 z" fill="#e9c63b"/></g>
<g><ellipse cx="1126.8" cy="747.7" rx="6.1" ry="7.8" fill="#1e8fe6"/><path d="M1123.8 744.3 L1129.6 750.4 L1126.8 753.2 V742 L1129.6 744.8 L1123.8 750.9" fill="none" stroke="#fff" stroke-width="1.2"/></g>
<g><rect x="1144.6" y="744.4" width="12.8" height="8" fill="none" stroke="#fff" stroke-width="1.2"/><rect x="1146.2" y="746" width="6" height="4.8" fill="#fff"/><rect x="1158" y="746.8" width="1.4" height="3.2" fill="#fff"/></g>
<g fill="none" stroke="#fff" stroke-width="1.3"><path d="M1170.5 755 a11.5 11.5 0 0 1 11.5 -11.5" /><path d="M1174 755 a8 8 0 0 1 8 -8"/><path d="M1177.5 755 a4.5 4.5 0 0 1 4.5 -4.5" stroke="#aaa"/><circle cx="1181.3" cy="753.8" r="1.3" fill="#fff" stroke="none"/></g>
<g fill="none" stroke="#fff" stroke-width="1.1"><path d="M1191.5 745.5 h2.5 l3.5 -3.5 v11 l-3.5 -3.5 h-2.5 z"/><path d="M1199.5 744.5 q2.2 3 0 6" /><path d="M1202 742.5 q3.6 5 0 10" stroke="#aaa"/><path d="M1204.5 741 q4.6 6.5 0 13" stroke="#666"/></g>
<text x="1218" y="752.3" font-size="12" fill="#fff" font-family='"Liberation Sans", sans-serif' textLength="22.5" lengthAdjust="spacingAndGlyphs" >РУС</text>
<text x="1279.5" y="743" font-size="12" fill="#fff" font-family='"Liberation Sans", sans-serif' textLength="27.5" lengthAdjust="spacingAndGlyphs" text-anchor="middle" >22:25</text>
<text x="1279.5" y="760.8" font-size="12" fill="#fff" font-family='"Liberation Sans", sans-serif' textLength="54.5" lengthAdjust="spacingAndGlyphs" text-anchor="middle" >05.08.2020</text>
<path d="M1325.5 741.5 H1340.5 V752.5 H1335.5 L1333 755 L1330.5 752.5 H1325.5 Z" fill="none" stroke="#fff" stroke-width="1.2"/>
<rect x="1230" y="693" width="100" height="35" fill="#767676" shape-rendering="crispEdges"/>
<rect x="1231" y="694" width="98" height="33" fill="#ffffff" shape-rendering="crispEdges"/>
<text x="1236.5" y="707.5" font-size="12" fill="#575757" font-family='"Liberation Sans", sans-serif' textLength="86.5" lengthAdjust="spacingAndGlyphs" >5 августа 2020 г.</text>
<text x="1236.5" y="722.3" font-size="12" fill="#575757" font-family='"Liberation Sans", sans-serif' textLength="30" lengthAdjust="spacingAndGlyphs" >среда</text>
</svg>
</body></html>
